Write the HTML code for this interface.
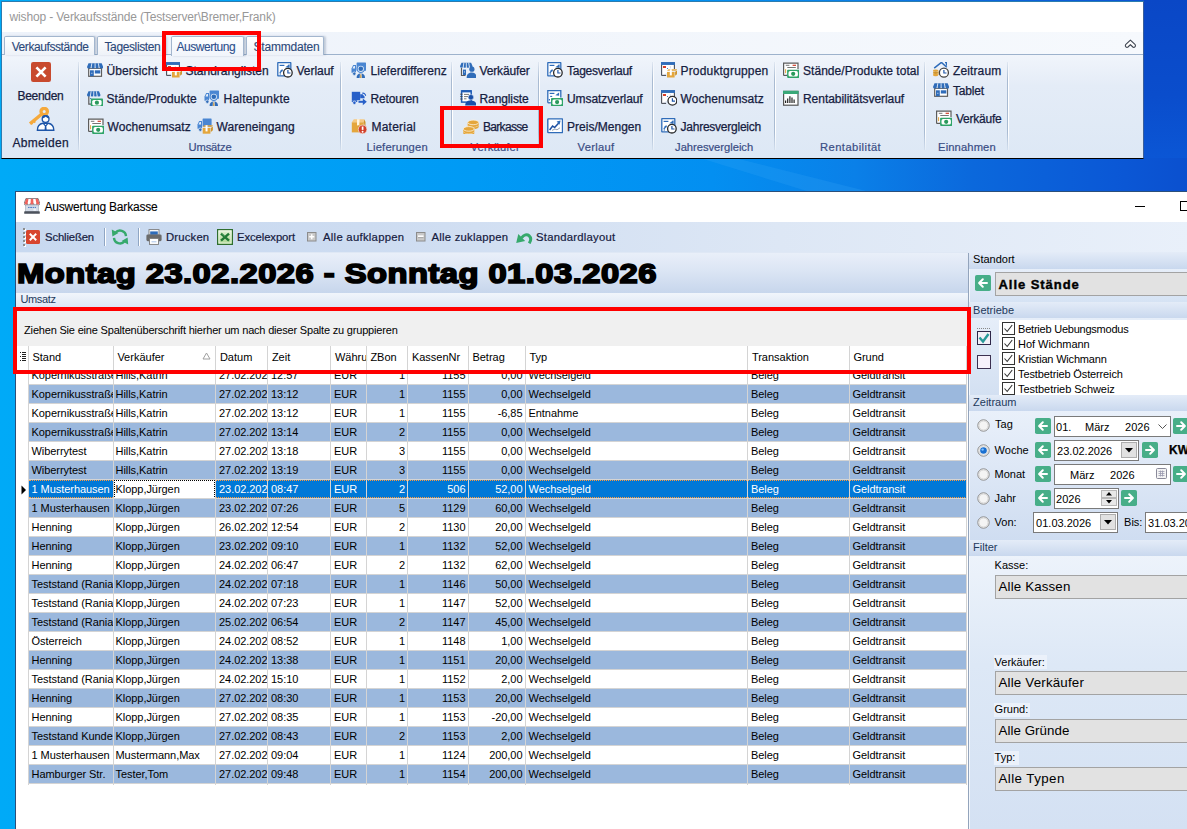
<!DOCTYPE html>
<html><head><meta charset="utf-8"><title>wishop</title>
<style>
html,body{margin:0;padding:0}
body{width:1187px;height:829px;overflow:hidden;position:relative;font-family:"Liberation Sans",sans-serif;background:#0a6fd8}
.b{position:absolute;box-sizing:border-box}
.t{position:absolute;white-space:nowrap;font-family:"Liberation Sans",sans-serif}
.c{position:absolute;white-space:nowrap;overflow:hidden;font-size:11px;line-height:19px;height:19px;color:#000;box-sizing:border-box;letter-spacing:-0.05px}
</style></head><body>
<div class="b" style="left:0px;top:0px;width:1187px;height:829px;background:linear-gradient(90deg,#00aaf7 0%,#00a3f6 17%,#009af5 40%,#038ff1 60%,#0a80e8 72%,#0b68dc 82%,#0b58d6 94%,#0b50cf 100%)"></div>
<div class="b" style="left:1144px;top:0px;width:43px;height:158px;background:linear-gradient(#0a47c6,#0a4dcc 60%,#0b56d5)"></div>
<svg class="b" style="left:700px;top:158px" width="487" height="34" viewBox="0 0 487 34"><path d="M35 0L170 34H110L0 0z" fill="#3aaaf6" opacity="0.22"/></svg>
<div class="b" style="left:1px;top:1px;width:1143px;height:158px;background:#fff;border-left:1px solid #2b7cb0;border-top:1px solid #2b7cb0;border-right:1px solid #3a5f9a;border-bottom:1px solid #000"></div>
<span class="t" style="left:9.5px;top:9.0px;font-size:12px;line-height:16px;color:#989898;letter-spacing:-0.150px;">wishop - Verkaufsstände (Testserver\Bremer,Frank)</span>
<div class="b" style="left:2px;top:32px;width:1141px;height:23px;background:linear-gradient(90deg,#edf2fa,#f6f9fd)"></div>
<div class="b" style="left:2px;top:54px;width:1141px;height:1px;background:#9db2cc"></div>
<div class="b" style="left:2px;top:55px;width:1141px;height:103px;background:linear-gradient(#f1f5fb 0%,#e4ecf7 30%,#dde8f5 100%)"></div>
<div class="b" style="left:4px;top:36px;width:91px;height:19px;background:linear-gradient(#ffffff,#eef2f8);border:1px solid #a3b6ce;border-bottom:none;border-radius:2px 2px 0 0;box-shadow:2px 0 2px rgba(90,110,140,.3)"></div>
<span class="t" style="left:11.7px;top:39.0px;font-size:12px;line-height:16px;color:#2b4878;letter-spacing:-0.424px;-webkit-text-stroke:0.1px currentColor;">Verkaufsstände</span>
<div class="b" style="left:97px;top:36px;width:68px;height:19px;background:linear-gradient(#ffffff,#eef2f8);border:1px solid #a3b6ce;border-bottom:none;border-radius:2px 2px 0 0;box-shadow:2px 0 2px rgba(90,110,140,.3)"></div>
<span class="t" style="left:104.5px;top:39.0px;font-size:12px;line-height:16px;color:#2b4878;letter-spacing:-0.383px;-webkit-text-stroke:0.1px currentColor;">Tageslisten</span>
<div class="b" style="left:171px;top:36px;width:73px;height:20px;background:linear-gradient(#fdfeff,#f1f5fb);border:1px solid #a3b6ce;border-bottom:none;border-radius:2px 2px 0 0;box-shadow:2px 0 2px rgba(90,110,140,.35)"></div>
<span class="t" style="left:176.5px;top:39.0px;font-size:12px;line-height:16px;color:#2b4f8c;letter-spacing:-0.463px;-webkit-text-stroke:0.1px currentColor;">Auswertung</span>
<div class="b" style="left:246px;top:36px;width:78px;height:19px;background:linear-gradient(#ffffff,#eef2f8);border:1px solid #a3b6ce;border-bottom:none;border-radius:2px 2px 0 0;box-shadow:2px 0 2px rgba(90,110,140,.3)"></div>
<span class="t" style="left:253.5px;top:39.0px;font-size:12px;line-height:16px;color:#2b4878;letter-spacing:-0.203px;-webkit-text-stroke:0.1px currentColor;">Stammdaten</span>
<svg class="b" style="left:1124px;top:38px" width="14" height="11" viewBox="0 0 14 11"><path d="M6.400 2.200L11.200 6.700a1.700 1.700 0 0 1-2.400 2.300L6.400 6.600 4 9a1.700 1.700 0 0 1-2.400-2.300Z" fill="#fff" stroke="#3d4450" stroke-width="1.100" stroke-linejoin="round"/></svg>
<div class="b" style="left:78px;top:62px;width:1px;height:88px;background:linear-gradient(rgba(170,188,210,.2),#a9bbd2 20%,#a9bbd2 80%,rgba(170,188,210,.2))"></div>
<div class="b" style="left:79px;top:62px;width:1px;height:88px;background:linear-gradient(rgba(255,255,255,.2),#fff 20%,#fff 80%,rgba(255,255,255,.2))"></div>
<div class="b" style="left:340px;top:62px;width:1px;height:88px;background:linear-gradient(rgba(170,188,210,.2),#a9bbd2 20%,#a9bbd2 80%,rgba(170,188,210,.2))"></div>
<div class="b" style="left:341px;top:62px;width:1px;height:88px;background:linear-gradient(rgba(255,255,255,.2),#fff 20%,#fff 80%,rgba(255,255,255,.2))"></div>
<div class="b" style="left:451px;top:62px;width:1px;height:88px;background:linear-gradient(rgba(170,188,210,.2),#a9bbd2 20%,#a9bbd2 80%,rgba(170,188,210,.2))"></div>
<div class="b" style="left:452px;top:62px;width:1px;height:88px;background:linear-gradient(rgba(255,255,255,.2),#fff 20%,#fff 80%,rgba(255,255,255,.2))"></div>
<div class="b" style="left:538px;top:62px;width:1px;height:88px;background:linear-gradient(rgba(170,188,210,.2),#a9bbd2 20%,#a9bbd2 80%,rgba(170,188,210,.2))"></div>
<div class="b" style="left:539px;top:62px;width:1px;height:88px;background:linear-gradient(rgba(255,255,255,.2),#fff 20%,#fff 80%,rgba(255,255,255,.2))"></div>
<div class="b" style="left:652px;top:62px;width:1px;height:88px;background:linear-gradient(rgba(170,188,210,.2),#a9bbd2 20%,#a9bbd2 80%,rgba(170,188,210,.2))"></div>
<div class="b" style="left:653px;top:62px;width:1px;height:88px;background:linear-gradient(rgba(255,255,255,.2),#fff 20%,#fff 80%,rgba(255,255,255,.2))"></div>
<div class="b" style="left:774px;top:62px;width:1px;height:88px;background:linear-gradient(rgba(170,188,210,.2),#a9bbd2 20%,#a9bbd2 80%,rgba(170,188,210,.2))"></div>
<div class="b" style="left:775px;top:62px;width:1px;height:88px;background:linear-gradient(rgba(255,255,255,.2),#fff 20%,#fff 80%,rgba(255,255,255,.2))"></div>
<div class="b" style="left:924px;top:62px;width:1px;height:88px;background:linear-gradient(rgba(170,188,210,.2),#a9bbd2 20%,#a9bbd2 80%,rgba(170,188,210,.2))"></div>
<div class="b" style="left:925px;top:62px;width:1px;height:88px;background:linear-gradient(rgba(255,255,255,.2),#fff 20%,#fff 80%,rgba(255,255,255,.2))"></div>
<div class="b" style="left:1007px;top:62px;width:1px;height:88px;background:linear-gradient(rgba(170,188,210,.2),#a9bbd2 20%,#a9bbd2 80%,rgba(170,188,210,.2))"></div>
<div class="b" style="left:1008px;top:62px;width:1px;height:88px;background:linear-gradient(rgba(255,255,255,.2),#fff 20%,#fff 80%,rgba(255,255,255,.2))"></div>
<svg class="b" style="left:31px;top:62px" width="20" height="20" viewBox="0 0 20 20"><rect x="0" y="0" width="20" height="20" rx="2.2" fill="#c84a2e"/><path d="M5.4 5.4L14.6 14.6M14.6 5.4L5.4 14.6" stroke="#fff" stroke-width="2.7" stroke-linecap="butt"/></svg>
<span class="t" style="left:17.5px;top:88.0px;font-size:12px;line-height:16px;color:#16203f;letter-spacing:-0.307px;-webkit-text-stroke:0.25px currentColor;">Beenden</span>
<svg class="b" style="left:27px;top:107px" width="28" height="24" viewBox="0 0 28 24"><circle cx="17.200" cy="4.500" r="3.200" fill="none" stroke="#f5a93c" stroke-width="3.300"/><path d="M14.500 7.200l-11.500 9.500" stroke="#f5a93c" stroke-width="3.400"/><path d="M6 13l2.200 2.600M3.600 15l1.800 2.200" stroke="#f5a93c" stroke-width="1.800"/><circle cx="18.600" cy="12" r="3.400" fill="#fff" stroke="#1d55a8" stroke-width="1.300"/><path d="M15 11.400c0-4.600 7.200-4.600 7.200 0c-1.800-.2-2.600-1-3.400-2c-.8 1-2 1.800-3.800 2z" fill="#1d55a8"/><path d="M10.400 23.200c0-4.400 1.600-6.400 5.600-7h5.200c4 .6 5.600 2.600 5.600 7z" fill="#fff" stroke="#1d55a8" stroke-width="1.400"/><path d="M16 16.200l2.600 3 2.600-3" fill="none" stroke="#1d55a8" stroke-width="1.200"/><path d="M18 18.600h1.200l.5 4.400h-2.200z" fill="#1d55a8"/></svg>
<span class="t" style="left:12.5px;top:135.0px;font-size:12px;line-height:16px;color:#16203f;letter-spacing:0.310px;-webkit-text-stroke:0.25px currentColor;">Abmelden</span>
<svg class="b" style="left:87px;top:62px" width="16" height="16" viewBox="0 0 16 16"><rect x="1.700" y="6.300" width="12.800" height="8" fill="#fff" stroke="#5c5c5c" stroke-width="1.200"/><path d="M1.50 1.30h13.20l1.50 3.80a2.02 1.500 0 0 1 -4.05 0a2.02 1.500 0 0 1 -4.05 0a2.02 1.500 0 0 1 -4.05 0a2.02 1.500 0 0 1 -4.05 0z" fill="#2f6cb9"/><path d="M4.80 1.30L4.05 6.10" stroke="#fff" stroke-width="0.800"/><path d="M8.10 1.30L8.10 6.10" stroke="#fff" stroke-width="0.800"/><path d="M11.40 1.30L12.15 6.10" stroke="#fff" stroke-width="0.800"/><rect x="3" y="8.300" width="3.800" height="5.900" fill="#2f6cb9"/><rect x="4.400" y="10.800" width="0.900" height="0.900" fill="#fff"/><rect x="7.800" y="8.300" width="5.500" height="3.200" fill="#2f6cb9"/></svg>
<span class="t" style="left:106.5px;top:62.5px;font-size:12px;line-height:16px;color:#16203f;letter-spacing:0.065px;-webkit-text-stroke:0.25px currentColor;">Übersicht</span>
<svg class="b" style="left:166px;top:62px" width="16" height="16" viewBox="0 0 16 16"><path d="M0.600 13.400v-12h12.800v5.500" fill="#fff" stroke="#4a4e58" stroke-width="1.100"/><path d="M0.600 13.400h4.500" stroke="#4a4e58" stroke-width="1.100"/><path d="M0 1.500h14" stroke="#2f6cb9" stroke-width="2.900"/><rect x="2" y="4.100" width="3" height="1.800" fill="#d42a10"/><rect x="6" y="6" width="1" height="0.900" fill="#2f6cb9"/><path d="M9.400 4v2.400" stroke="#d0d6e2" stroke-width="0.800"/><path d="M6.00 8.80l1.600-1.600h9.00l-2 1.600z" fill="#e4a63c"/><rect x="6.00" y="9.90" width="7.60" height="5.60" fill="#e4a63c"/><path d="M14.10 9.90l2-1.700v3.90l-2 1.700z" fill="#cf952e"/><rect x="8.80" y="7.20" width="2" height="6.20" fill="#fff"/></svg>
<span class="t" style="left:185.5px;top:62.5px;font-size:12px;line-height:16px;color:#16203f;letter-spacing:-0.013px;-webkit-text-stroke:0.25px currentColor;">Standranglisten</span>
<svg class="b" style="left:277px;top:62px" width="16" height="16" viewBox="0 0 16 16"><rect x="0.800" y="0.600" width="13" height="13.300" rx="0.500" fill="#fff" stroke="#2f6cb9" stroke-width="1.300"/><path d="M2.600 3.400h4.800" stroke="#2f6cb9" stroke-width="1.200"/><path d="M2.800 11l2.500-3.200" stroke="#2f6cb9" stroke-width="1.300"/><path d="M3.200 8.400l2.600-1.200-.6 2.600z" fill="#2f6cb9"/><path d="M8.300 5.300l3.800-2.800v3.300z" fill="#2f6cb9"/><path d="M12.100 2.500v3.300" stroke="#2f6cb9" stroke-width="1"/><path d="M2.600 12h1.400" stroke="#2f6cb9" stroke-width="1"/><circle cx="10.9" cy="10.7" r="4.3" fill="#fff" stroke="#2a2a2a" stroke-width="1.300"/><path d="M10.9 8.1v2.9h2.6" fill="none" stroke="#1d55a8" stroke-width="1.200"/></svg>
<span class="t" style="left:296.5px;top:62.5px;font-size:12px;line-height:16px;color:#16203f;letter-spacing:-0.026px;-webkit-text-stroke:0.25px currentColor;">Verlauf</span>
<svg class="b" style="left:87px;top:90px" width="16" height="16" viewBox="0 0 16 16"><path d="M1.800 6v8.200h3" fill="none" stroke="#5c5c5c" stroke-width="1.200"/><path d="M1.50 1.30h10.50l1.50 3.60a1.69 1.500 0 0 1 -3.38 0a1.69 1.500 0 0 1 -3.38 0a1.69 1.500 0 0 1 -3.38 0a1.69 1.500 0 0 1 -3.38 0z" fill="#2f6cb9"/><path d="M4.12 1.30L3.38 5.90" stroke="#fff" stroke-width="0.800"/><path d="M6.75 1.30L6.75 5.90" stroke="#fff" stroke-width="0.800"/><path d="M9.38 1.30L10.12 5.90" stroke="#fff" stroke-width="0.800"/><rect x="3.200" y="8" width="1" height="1" fill="#2f6cb9"/><rect x="3.80" y="8.60" width="12.20" height="8.20" rx="0.800" fill="#2fa468"/><rect x="5.20" y="10.00" width="9.40" height="5.40" rx="1.600" fill="#fff"/><circle cx="9.90" cy="12.70" r="2.100" fill="#2a9a5c"/></svg>
<span class="t" style="left:106.5px;top:90.5px;font-size:12px;line-height:16px;color:#16203f;letter-spacing:0.058px;-webkit-text-stroke:0.25px currentColor;">Stände/Produkte</span>
<svg class="b" style="left:204px;top:90px" width="16" height="16" viewBox="0 0 16 16"><rect x="5.600" y="0.400" width="9.4" height="8.4" rx="0.600" fill="#4a86d2"/><path d="M0.500 10.800V6.600L2.200 3H5V10.800Z" fill="#4a86d2"/><path d="M1.500 6.400L2.700 4H4V6.400Z" fill="#e3edf9"/><circle cx="3.300" cy="11.700" r="1.700" fill="#2f6cb9" stroke="#e6eef8" stroke-width="0.700"/><circle cx="9.800" cy="6.800" r="3.700" fill="#d6e4f6" stroke="#4a86d2" stroke-width="1.100"/><circle cx="9.800" cy="6.800" r="2.300" fill="#2f6cb9"/><path d="M5.600 16c0-3 1.200-4.600 4.200-4.600s4.200 1.600 4.200 4.600z" fill="#2f6cb9"/><path d="M8.900 11.600h1.800l.3 4.400h-2.400z" fill="#cdd2da"/><path d="M9.400 12.400h.8l.2 3.600h-1.200z" fill="#cf952e"/></svg>
<span class="t" style="left:223.5px;top:90.5px;font-size:12px;line-height:16px;color:#16203f;letter-spacing:0.216px;-webkit-text-stroke:0.25px currentColor;">Haltepunkte</span>
<svg class="b" style="left:88px;top:118px" width="16" height="16" viewBox="0 0 16 16"><path d="M0.600 13.400v-12.300h14.400v6" fill="#fff" stroke="#5c5c5c" stroke-width="1.200"/><path d="M0.600 13.400h4" stroke="#5c5c5c" stroke-width="1.200"/><path d="M2.800 3.300h3.600" stroke="#777" stroke-width="1"/><path d="M9.600 3.300h3.400" stroke="#d13f2a" stroke-width="1.200"/><path d="M4.300 5.500h8.500" stroke="#777" stroke-width="1"/><path d="M2.600 7.200v4" stroke="#e4a63c" stroke-width="1"/><rect x="4.10" y="7.70" width="12.20" height="8.20" rx="0.800" fill="#2fa468"/><rect x="5.50" y="9.10" width="9.40" height="5.40" rx="1.600" fill="#fff"/><circle cx="10.20" cy="11.80" r="2.100" fill="#2a9a5c"/></svg>
<span class="t" style="left:107.5px;top:118.5px;font-size:12px;line-height:16px;color:#16203f;letter-spacing:0.066px;-webkit-text-stroke:0.25px currentColor;">Wochenumsatz</span>
<svg class="b" style="left:197px;top:118px" width="16" height="16" viewBox="0 0 16 16"><rect x="5.600" y="0.400" width="9" height="8.4" rx="0.600" fill="#4a86d2"/><path d="M0.500 10.800V6.600L2.200 3H5V10.800Z" fill="#4a86d2"/><path d="M1.500 6.400L2.700 4H4V6.400Z" fill="#e3edf9"/><circle cx="3.300" cy="11.700" r="1.700" fill="#2f6cb9" stroke="#e6eef8" stroke-width="0.700"/><path d="M5.70 8.80l1.600-1.600h9.10l-2 1.600z" fill="#e4a63c"/><rect x="5.70" y="9.90" width="7.70" height="5.80" fill="#e4a63c"/><path d="M13.90 9.90l2-1.700v4.10l-2 1.700z" fill="#cf952e"/><rect x="8.55" y="7.20" width="2" height="6.20" fill="#fff"/></svg>
<span class="t" style="left:216.5px;top:118.5px;font-size:12px;line-height:16px;color:#16203f;letter-spacing:0.054px;-webkit-text-stroke:0.25px currentColor;">Wareneingang</span>
<span class="t" style="left:188.6px;top:139.0px;font-size:11.2px;line-height:16px;color:#3a4d84;letter-spacing:-0.178px;-webkit-text-stroke:0.2px currentColor;">Umsätze</span>
<svg class="b" style="left:351px;top:62px" width="16" height="16" viewBox="0 0 16 16"><rect x="5.600" y="0.400" width="9.4" height="8.4" rx="0.600" fill="#4a86d2"/><path d="M0.500 10.800V6.600L2.200 3H5V10.800Z" fill="#4a86d2"/><path d="M1.500 6.400L2.700 4H4V6.400Z" fill="#e3edf9"/><circle cx="3.300" cy="11.700" r="1.700" fill="#2f6cb9" stroke="#e6eef8" stroke-width="0.700"/><circle cx="9.800" cy="6.800" r="3.700" fill="#d6e4f6" stroke="#4a86d2" stroke-width="1.100"/><circle cx="9.800" cy="6.800" r="2.300" fill="#2f6cb9"/><path d="M5.600 16c0-3 1.200-4.600 4.200-4.600s4.200 1.600 4.200 4.600z" fill="#2f6cb9"/><path d="M8.900 11.600h1.800l.3 4.400h-2.400z" fill="#cdd2da"/><path d="M9.400 12.400h.8l.2 3.600h-1.200z" fill="#cf952e"/></svg>
<span class="t" style="left:370.5px;top:62.5px;font-size:12px;line-height:16px;color:#16203f;letter-spacing:0.027px;-webkit-text-stroke:0.25px currentColor;">Lieferdifferenz</span>
<svg class="b" style="left:351px;top:90px" width="16" height="16" viewBox="0 0 16 16"><path d="M0.800 1.800h8.400v8.400h-8.400z" fill="#2860c8"/><path d="M9.200 4.200h2.400l2 2.600v1.400h-4.400z" fill="#2860c8"/><path d="M11.200 3.300a2.600 2.600 0 0 1 3.400 2.600" fill="none" stroke="#2860c8" stroke-width="1.100"/><path d="M0.800 10.200h5.400v1.800h-5.400z" fill="#2860c8"/><circle cx="3.400" cy="12.800" r="1.700" fill="#2860c8" stroke="#e6eef8" stroke-width="0.700"/><path d="M7.500 11.800h6.200" stroke="#2860c8" stroke-width="2"/><path d="M11.800 8.400l4 3.400-4 3.400z" fill="#2860c8"/></svg>
<span class="t" style="left:370.5px;top:90.5px;font-size:12px;line-height:16px;color:#16203f;letter-spacing:-0.166px;-webkit-text-stroke:0.25px currentColor;">Retouren</span>
<svg class="b" style="left:351px;top:118px" width="16" height="16" viewBox="0 0 16 16"><path d="M0.800 4.200h12v10.200h-12z" fill="#e4a63c"/><path d="M0.800 4.200l2-3h10.500l-0.500 3z" fill="#f6c982"/><path d="M12.800 4.200l.5-3 1.200 2.800v8z" fill="#cf952e"/><path d="M6 1.200h2.600l-.2 3v3.600l-1.200-.9-1.200.9v-3.600z" fill="#fff6e2"/><circle cx="11.600" cy="11.400" r="4.300" fill="#d13f2a" stroke="#f3e4dc" stroke-width="0.700"/><path d="M11.600 8.500v3.400" stroke="#fff" stroke-width="1.700"/><circle cx="11.600" cy="13.700" r="0.950" fill="#fff"/></svg>
<span class="t" style="left:371.5px;top:118.5px;font-size:12px;line-height:16px;color:#16203f;letter-spacing:0.218px;-webkit-text-stroke:0.25px currentColor;">Material</span>
<span class="t" style="left:366.6px;top:139.0px;font-size:11.2px;line-height:16px;color:#3a4d84;letter-spacing:0.196px;-webkit-text-stroke:0.2px currentColor;">Lieferungen</span>
<svg class="b" style="left:460px;top:62px" width="16" height="16" viewBox="0 0 16 16"><path d="M1.500 6v7.500h4" fill="none" stroke="#5c5c5c" stroke-width="1.200"/><path d="M1.50 0.80h9.60l1.50 3.50a1.57 1.500 0 0 1 -3.15 0a1.57 1.500 0 0 1 -3.15 0a1.57 1.500 0 0 1 -3.15 0a1.57 1.500 0 0 1 -3.15 0z" fill="#2f6cb9"/><path d="M3.90 0.80L3.15 5.30" stroke="#fff" stroke-width="0.800"/><path d="M6.30 0.80L6.30 5.30" stroke="#fff" stroke-width="0.800"/><path d="M8.70 0.80L9.45 5.30" stroke="#fff" stroke-width="0.800"/><rect x="3" y="7.600" width="3" height="5.400" fill="#2f6cb9"/><rect x="4" y="9.500" width="0.900" height="0.900" fill="#fff"/><circle cx="11.900" cy="7.200" r="2.600" fill="#2f6cb9"/><path d="M6.600 16c0-3.400 1.600-5.600 5.200-5.600s4.600 2.200 4.600 5.600z" fill="#2f6cb9"/></svg>
<span class="t" style="left:479.5px;top:62.5px;font-size:12px;line-height:16px;color:#16203f;letter-spacing:-0.145px;-webkit-text-stroke:0.25px currentColor;">Verkäufer</span>
<svg class="b" style="left:460px;top:90px" width="16" height="16" viewBox="0 0 16 16"><rect x="1.600" y="0.900" width="9.600" height="11.200" fill="#fff" stroke="#1f5cb6" stroke-width="1.500"/><path d="M1.600 1.300h9.600" stroke="#1f5cb6" stroke-width="2.200"/><path d="M0.300 4.200h2.200M0.300 6.600h2.200M0.300 9h2.200" stroke="#444" stroke-width="1"/><path d="M4 4.400h5M4 6.600h4M4 8.800h2.500" stroke="#777" stroke-width="1"/><circle cx="10.900" cy="7.200" r="2.700" fill="#174fa8" stroke="#e6eef8" stroke-width="0.500"/><path d="M5.200 15.600c0-3 1.600-5 5.600-5s5.600 2 5.600 5z" fill="#174fa8"/></svg>
<span class="t" style="left:479.5px;top:90.5px;font-size:12px;line-height:16px;color:#16203f;letter-spacing:-0.103px;-webkit-text-stroke:0.25px currentColor;">Rangliste</span>
<svg class="b" style="left:463px;top:118px" width="16" height="16" viewBox="0 0 16 16"><path d="M4.70 6.60v2.20a5.50 2.30 0 0 0 11.00 0v-2.20z" fill="#e4a63c"/><ellipse cx="10.20" cy="6.60" rx="5.50" ry="2.30" fill="#e4a63c" stroke="#fdf3e0" stroke-width="0.800"/><path d="M4.70 4.40v2.20a5.50 2.30 0 0 0 11.00 0v-2.20z" fill="#e4a63c"/><ellipse cx="10.20" cy="4.40" rx="5.50" ry="2.30" fill="#e4a63c" stroke="#fdf3e0" stroke-width="0.800"/><path d="M0.30 13.10v2.20a5.50 2.30 0 0 0 11.00 0v-2.20z" fill="#e4a63c"/><ellipse cx="5.80" cy="13.10" rx="5.50" ry="2.30" fill="#e4a63c" stroke="#fdf3e0" stroke-width="0.800"/><path d="M0.30 10.90v2.20a5.50 2.30 0 0 0 11.00 0v-2.20z" fill="#e4a63c"/><ellipse cx="5.80" cy="10.90" rx="5.50" ry="2.30" fill="#e4a63c" stroke="#fdf3e0" stroke-width="0.800"/></svg>
<span class="t" style="left:483.0px;top:118.5px;font-size:12px;line-height:16px;color:#16203f;letter-spacing:-0.688px;-webkit-text-stroke:0.25px currentColor;">Barkasse</span>
<span class="t" style="left:470.6px;top:139.0px;font-size:11.2px;line-height:16px;color:#3a4d84;letter-spacing:0.148px;-webkit-text-stroke:0.2px currentColor;">Verkäufer</span>
<svg class="b" style="left:547px;top:62px" width="16" height="16" viewBox="0 0 16 16"><rect x="0.800" y="0.600" width="13" height="13.300" rx="0.500" fill="#fff" stroke="#2f6cb9" stroke-width="1.300"/><path d="M2.600 3.400h4.800" stroke="#2f6cb9" stroke-width="1.200"/><path d="M2.800 11l2.500-3.200" stroke="#2f6cb9" stroke-width="1.300"/><path d="M3.200 8.400l2.600-1.200-.6 2.600z" fill="#2f6cb9"/><path d="M8.300 5.300l3.800-2.800v3.300z" fill="#2f6cb9"/><path d="M12.100 2.500v3.300" stroke="#2f6cb9" stroke-width="1"/><path d="M2.600 12h1.400" stroke="#2f6cb9" stroke-width="1"/><circle cx="10.9" cy="10.7" r="4.3" fill="#fff" stroke="#2a2a2a" stroke-width="1.300"/><path d="M10.9 8.1v2.9h2.6" fill="none" stroke="#1d55a8" stroke-width="1.200"/></svg>
<span class="t" style="left:567.0px;top:62.5px;font-size:12px;line-height:16px;color:#16203f;letter-spacing:-0.258px;-webkit-text-stroke:0.25px currentColor;">Tagesverlauf</span>
<svg class="b" style="left:547px;top:90px" width="16" height="16" viewBox="0 0 16 16"><path d="M0.800 12.800v-12.200h13v7" fill="#fff" stroke="#2f6cb9" stroke-width="1.300"/><path d="M0.800 12.800h3" stroke="#2f6cb9" stroke-width="1.300"/><path d="M2.600 3.400h4.800" stroke="#2f6cb9" stroke-width="1.200"/><path d="M3.200 6.400h2" stroke="#2f6cb9" stroke-width="1.100"/><path d="M8.300 5.300l3.800-2.800v3.300z" fill="#2f6cb9"/><path d="M2.400 9v1.600" stroke="#2f6cb9" stroke-width="1.200"/><rect x="4.00" y="8.00" width="12.20" height="8.20" rx="0.800" fill="#2fa468"/><rect x="5.40" y="9.40" width="9.40" height="5.40" rx="1.600" fill="#fff"/><circle cx="10.10" cy="12.10" r="2.100" fill="#2a9a5c"/></svg>
<span class="t" style="left:567.0px;top:90.5px;font-size:12px;line-height:16px;color:#16203f;letter-spacing:-0.082px;-webkit-text-stroke:0.25px currentColor;">Umsatzverlauf</span>
<svg class="b" style="left:547px;top:118px" width="16" height="16" viewBox="0 0 16 16"><rect x="0.800" y="0.900" width="14.700" height="13.700" rx="0.500" fill="#fff" stroke="#2f6cb9" stroke-width="1.400"/><path d="M2.600 12l3-4 2 1.600 4.200-4.600" fill="none" stroke="#1d4fa0" stroke-width="1.500"/><path d="M9.600 3.600l4-1-1 4.200z" fill="#2f6cb9"/><path d="M5 12.400l3-1.400 2 .8 3-2" fill="none" stroke="#8a96a8" stroke-width="0.900"/></svg>
<span class="t" style="left:567.0px;top:118.5px;font-size:12px;line-height:16px;color:#16203f;letter-spacing:0.015px;-webkit-text-stroke:0.25px currentColor;">Preis/Mengen</span>
<span class="t" style="left:577.6px;top:139.0px;font-size:11.2px;line-height:16px;color:#3a4d84;letter-spacing:0.292px;-webkit-text-stroke:0.2px currentColor;">Verlauf</span>
<svg class="b" style="left:661px;top:62px" width="16" height="16" viewBox="0 0 16 16"><path d="M0.600 13.400v-12h12.800v5.500" fill="#fff" stroke="#4a4e58" stroke-width="1.100"/><path d="M0.600 13.400h4.500" stroke="#4a4e58" stroke-width="1.100"/><path d="M0 1.500h14" stroke="#2f6cb9" stroke-width="2.900"/><rect x="2" y="4.100" width="3" height="1.800" fill="#d42a10"/><rect x="6" y="6" width="1" height="0.900" fill="#2f6cb9"/><path d="M9.400 4v2.400" stroke="#d0d6e2" stroke-width="0.800"/><path d="M6.00 8.80l1.600-1.600h9.00l-2 1.600z" fill="#e4a63c"/><rect x="6.00" y="9.90" width="7.60" height="5.60" fill="#e4a63c"/><path d="M14.10 9.90l2-1.700v3.90l-2 1.700z" fill="#cf952e"/><rect x="8.80" y="7.20" width="2" height="6.20" fill="#fff"/></svg>
<span class="t" style="left:680.5px;top:62.5px;font-size:12px;line-height:16px;color:#16203f;letter-spacing:0.178px;-webkit-text-stroke:0.25px currentColor;">Produktgruppen</span>
<svg class="b" style="left:661px;top:90px" width="16" height="16" viewBox="0 0 16 16"><path d="M0.600 13.400v-12h12.800v5.500" fill="#fff" stroke="#4a4e58" stroke-width="1.100"/><path d="M0.600 13.400h4.500" stroke="#4a4e58" stroke-width="1.100"/><path d="M0 1.500h14" stroke="#2f6cb9" stroke-width="2.900"/><rect x="2" y="4.100" width="3" height="1.800" fill="#d42a10"/><rect x="6" y="6" width="1" height="0.900" fill="#2f6cb9"/><path d="M9.400 4v2.400" stroke="#d0d6e2" stroke-width="0.800"/><circle cx="11.4" cy="10.8" r="4.4" fill="#fff" stroke="#2a2a2a" stroke-width="1.300"/><path d="M11.4 8.200000000000001v2.9h2.6" fill="none" stroke="#1d55a8" stroke-width="1.200"/></svg>
<span class="t" style="left:680.5px;top:90.5px;font-size:12px;line-height:16px;color:#16203f;letter-spacing:0.066px;-webkit-text-stroke:0.25px currentColor;">Wochenumsatz</span>
<svg class="b" style="left:661px;top:118px" width="16" height="16" viewBox="0 0 16 16"><rect x="0.800" y="0.600" width="13" height="13.300" rx="0.500" fill="#fff" stroke="#2f6cb9" stroke-width="1.300"/><path d="M2.600 3.400h4.800" stroke="#2f6cb9" stroke-width="1.200"/><path d="M2.800 11l2.500-3.200" stroke="#2f6cb9" stroke-width="1.300"/><path d="M3.200 8.400l2.600-1.200-.6 2.600z" fill="#2f6cb9"/><path d="M8.300 5.300l3.800-2.800v3.300z" fill="#2f6cb9"/><path d="M12.100 2.500v3.300" stroke="#2f6cb9" stroke-width="1"/><path d="M2.600 12h1.400" stroke="#2f6cb9" stroke-width="1"/><circle cx="10.9" cy="10.7" r="4.3" fill="#fff" stroke="#2a2a2a" stroke-width="1.300"/><path d="M10.9 8.1v2.9h2.6" fill="none" stroke="#1d55a8" stroke-width="1.200"/></svg>
<span class="t" style="left:680.5px;top:118.5px;font-size:12px;line-height:16px;color:#16203f;letter-spacing:-0.238px;-webkit-text-stroke:0.25px currentColor;">Jahresvergleich</span>
<span class="t" style="left:675.1px;top:139.0px;font-size:11.2px;line-height:16px;color:#3a4d84;letter-spacing:-0.022px;-webkit-text-stroke:0.2px currentColor;">Jahresvergleich</span>
<svg class="b" style="left:783px;top:62px" width="16" height="16" viewBox="0 0 16 16"><path d="M0.600 13.400v-12.300h14.400v6" fill="#fff" stroke="#5c5c5c" stroke-width="1.200"/><path d="M0.600 13.400h4" stroke="#5c5c5c" stroke-width="1.200"/><path d="M2.800 3.300h3.600" stroke="#777" stroke-width="1"/><path d="M9.600 3.300h3.400" stroke="#d13f2a" stroke-width="1.200"/><path d="M4.300 5.500h8.500" stroke="#777" stroke-width="1"/><path d="M2.600 7.200v4" stroke="#e4a63c" stroke-width="1"/><rect x="4.10" y="7.70" width="12.20" height="8.20" rx="0.800" fill="#2fa468"/><rect x="5.50" y="9.10" width="9.40" height="5.40" rx="1.600" fill="#fff"/><circle cx="10.20" cy="11.80" r="2.100" fill="#2a9a5c"/></svg>
<span class="t" style="left:803.0px;top:62.5px;font-size:12px;line-height:16px;color:#16203f;letter-spacing:0.040px;-webkit-text-stroke:0.25px currentColor;">Stände/Produkte total</span>
<svg class="b" style="left:783px;top:90px" width="16" height="16" viewBox="0 0 16 16"><rect x="0.600" y="1.400" width="14.400" height="13.800" fill="#fff" stroke="#555" stroke-width="1.200"/><path d="M0 2.400h15.600" stroke="#3aa878" stroke-width="3.200"/><path d="M2.600 13v-2.400M4.700 13v-4.600M6.900 13v-6.800M9 13v-5.600M11.100 13v-3.600" stroke="#222" stroke-width="1.200"/></svg>
<span class="t" style="left:803.0px;top:90.5px;font-size:12px;line-height:16px;color:#16203f;letter-spacing:-0.045px;-webkit-text-stroke:0.25px currentColor;">Rentabilitätsverlauf</span>
<span class="t" style="left:820.1px;top:139.0px;font-size:11.2px;line-height:16px;color:#3a4d84;letter-spacing:0.417px;-webkit-text-stroke:0.2px currentColor;">Rentabilität</span>
<svg class="b" style="left:933px;top:62px" width="16" height="16" viewBox="0 0 16 16"><path d="M1.200 6.200l7.200-5.800 5.400 4.800" fill="none" stroke="#2f6cb9" stroke-width="1.500"/><path d="M12 0.600h1.400v3.200" fill="none" stroke="#2f6cb9" stroke-width="1.200"/><ellipse cx="2.600" cy="8.600" rx="2.600" ry="1.200" fill="#e4a63c"/><ellipse cx="2.600" cy="10.800" rx="2.600" ry="1.200" fill="#cf952e"/><ellipse cx="2.600" cy="13" rx="2.600" ry="1.200" fill="#e4a63c"/><path d="M0 8.600v4.400M5.200 8.600v4.400" stroke="#e4a63c" stroke-width="0.800"/><circle cx="10.9" cy="10.7" r="4.5" fill="#fff" stroke="#444" stroke-width="1.300"/><path d="M10.9 8.1v2.9h2.6" fill="none" stroke="#1d55a8" stroke-width="1.200"/></svg>
<span class="t" style="left:953.0px;top:62.5px;font-size:12px;line-height:16px;color:#16203f;letter-spacing:0.123px;-webkit-text-stroke:0.25px currentColor;">Zeitraum</span>
<svg class="b" style="left:933px;top:82px" width="16" height="16" viewBox="0 0 16 16"><rect x="1.700" y="6.300" width="12.800" height="8" fill="#fff" stroke="#5c5c5c" stroke-width="1.200"/><path d="M1.50 1.30h13.20l1.50 3.80a2.02 1.500 0 0 1 -4.05 0a2.02 1.500 0 0 1 -4.05 0a2.02 1.500 0 0 1 -4.05 0a2.02 1.500 0 0 1 -4.05 0z" fill="#2f6cb9"/><path d="M4.80 1.30L4.05 6.10" stroke="#fff" stroke-width="0.800"/><path d="M8.10 1.30L8.10 6.10" stroke="#fff" stroke-width="0.800"/><path d="M11.40 1.30L12.15 6.10" stroke="#fff" stroke-width="0.800"/><rect x="3" y="8.300" width="3.800" height="5.900" fill="#2f6cb9"/><rect x="4.400" y="10.800" width="0.900" height="0.900" fill="#fff"/><rect x="7.800" y="8.300" width="5.500" height="3.200" fill="#2f6cb9"/></svg>
<span class="t" style="left:953.0px;top:82.5px;font-size:12px;line-height:16px;color:#16203f;letter-spacing:-0.164px;-webkit-text-stroke:0.25px currentColor;">Tablet</span>
<svg class="b" style="left:936px;top:110px" width="16" height="16" viewBox="0 0 16 16"><path d="M0.600 13.400v-12.300h14.400v6" fill="#fff" stroke="#5c5c5c" stroke-width="1.200"/><path d="M0.600 13.400h4" stroke="#5c5c5c" stroke-width="1.200"/><path d="M2.800 3.300h3.600" stroke="#777" stroke-width="1"/><path d="M9.600 3.300h3.400" stroke="#d13f2a" stroke-width="1.200"/><path d="M4.300 5.500h8.500" stroke="#777" stroke-width="1"/><path d="M2.600 7.200v4" stroke="#e4a63c" stroke-width="1"/><rect x="4.10" y="7.70" width="12.20" height="8.20" rx="0.800" fill="#2fa468"/><rect x="5.50" y="9.10" width="9.40" height="5.40" rx="1.600" fill="#fff"/><circle cx="10.20" cy="11.80" r="2.100" fill="#2a9a5c"/></svg>
<span class="t" style="left:956.0px;top:110.5px;font-size:12px;line-height:16px;color:#16203f;letter-spacing:-0.238px;-webkit-text-stroke:0.25px currentColor;">Verkäufe</span>
<span class="t" style="left:938.1px;top:139.0px;font-size:11.2px;line-height:16px;color:#3a4d84;letter-spacing:0.120px;-webkit-text-stroke:0.2px currentColor;">Einnahmen</span>
<div class="b" style="left:15px;top:191px;width:1180px;height:640px;background:#fff;border-left:1px solid #2b4f7a;border-top:1px solid #2b4f7a"></div>
<svg class="b" style="left:24px;top:198px" width="16" height="16" viewBox="0 0 16 16"><path d="M2 0.400h12l1.800 5.200c0 2-3.100 2-3.100 0c0 2-3.100 2-3.100 0c0 2-3.200 2-3.200 0c0 2-3.100 2-3.100 0c0 2-3.100 2-3.100 0z" fill="#fff" stroke="#5a5a62" stroke-width="0.800"/><path d="M2.200 0.800h2.300l-.9 4.800c0 1.600-3 1.600-3 0z" fill="#f0625c"/><path d="M6.800 0.800h2.400l.3 4.800c0 1.600-3 1.600-3 0z" fill="#f0625c"/><path d="M11.500 0.800h2.300l1.600 4.800c0 1.600-3 1.600-3 0z" fill="#f0625c"/><rect x="1.600" y="7" width="12.800" height="6.400" fill="#d4dce8" stroke="#9aa4b2" stroke-width="0.600"/><path d="M4 9.400h1.600M6.200 9.400h2M8.800 9.400h1.400M10.800 9.400h1.200" stroke="#4a78c0" stroke-width="1"/><rect x="9.500" y="10.800" width="2.400" height="2" fill="#eef2f8"/><rect x="0.200" y="13.300" width="15.600" height="2.500" rx="0.600" fill="#4c525c"/></svg>
<span class="t" style="left:44.5px;top:199.0px;font-size:12px;line-height:16px;color:#000;letter-spacing:-0.195px;-webkit-text-stroke:0.1px currentColor;">Auswertung Barkasse</span>
<div class="b" style="left:1135px;top:206px;width:10px;height:1px;background:#000"></div>
<div class="b" style="left:1180px;top:201px;width:10px;height:10px;border:1px solid #000"></div>
<div class="b" style="left:16px;top:222px;width:1175px;height:30px;background:linear-gradient(90deg,#c8d9f0 0%,#cddcf1 30%,#dde7f5 65%,#e9f0fa 100%)"></div>
<div class="b" style="left:16px;top:252px;width:1175px;height:1px;background:#dfe8f5"></div>
<div class="b" style="left:24px;top:229px;width:2px;height:2px;background:#fff"></div>
<div class="b" style="left:23px;top:228px;width:2px;height:2px;background:#8c8c8c"></div>
<div class="b" style="left:24px;top:233px;width:2px;height:2px;background:#fff"></div>
<div class="b" style="left:23px;top:232px;width:2px;height:2px;background:#8c8c8c"></div>
<div class="b" style="left:24px;top:237px;width:2px;height:2px;background:#fff"></div>
<div class="b" style="left:23px;top:236px;width:2px;height:2px;background:#8c8c8c"></div>
<div class="b" style="left:24px;top:241px;width:2px;height:2px;background:#fff"></div>
<div class="b" style="left:23px;top:240px;width:2px;height:2px;background:#8c8c8c"></div>
<div class="b" style="left:24px;top:245px;width:2px;height:2px;background:#fff"></div>
<div class="b" style="left:23px;top:244px;width:2px;height:2px;background:#8c8c8c"></div>
<svg class="b" style="left:26px;top:230px" width="14" height="14" viewBox="0 0 14 14"><rect x="0" y="0" width="14" height="14" rx="1.54" fill="#d8452e"/><path d="M3.7800000000000002 3.7800000000000002L10.219999999999999 10.219999999999999M10.219999999999999 3.7800000000000002L3.7800000000000002 10.219999999999999" stroke="#fff" stroke-width="1.8900000000000001" stroke-linecap="butt"/></svg>
<span class="t" style="left:45.0px;top:229.0px;font-size:11.3px;line-height:16px;color:#16203f;letter-spacing:-0.140px;-webkit-text-stroke:0.2px currentColor;">Schließen</span>
<div class="b" style="left:104px;top:228px;width:1px;height:18px;background:#8fa6c4"></div>
<div class="b" style="left:105px;top:228px;width:1px;height:18px;background:#fff"></div>
<svg class="b" style="left:111px;top:228px" width="18" height="18" viewBox="0 0 18 18"><path d="M15 8.200a6 6 0 0 0-10.600-3.400" fill="none" stroke="#36a96c" stroke-width="2.400"/><path d="M0.800 1.600l0.600 6.800 6-3.400z" fill="#36a96c"/><path d="M3 9.800a6 6 0 0 0 10.600 3.400" fill="none" stroke="#36a96c" stroke-width="2.400"/><path d="M17.200 16.400l-0.600-6.800-6 3.400z" fill="#36a96c"/></svg>
<div class="b" style="left:138px;top:228px;width:1px;height:18px;background:#8fa6c4"></div>
<div class="b" style="left:139px;top:228px;width:1px;height:18px;background:#fff"></div>
<svg class="b" style="left:146px;top:229px" width="16" height="16" viewBox="0 0 16 16"><rect x="3" y="0.600" width="10" height="5.500" fill="#fff" stroke="#7a7a7a" stroke-width="0.900"/><rect x="4.200" y="2.400" width="7.600" height="3.400" fill="#2f6cb9"/><rect x="0.400" y="5.400" width="15.200" height="6.800" rx="1.400" fill="#6b6b6b"/><rect x="3.500" y="9.400" width="9" height="6" fill="#fff" stroke="#7a7a7a" stroke-width="0.900"/><path d="M5.500 12.800h5" stroke="#a8c4e8" stroke-width="1"/></svg>
<span class="t" style="left:166.0px;top:229.0px;font-size:11.3px;line-height:16px;color:#16203f;letter-spacing:0.176px;-webkit-text-stroke:0.2px currentColor;">Drucken</span>
<svg class="b" style="left:217px;top:229px" width="16" height="16" viewBox="0 0 16 16"><defs><linearGradient id="xg" x1="0" y1="0" x2="0" y2="1"><stop offset="0" stop-color="#e4f3d8"/><stop offset="1" stop-color="#a9d58e"/></linearGradient></defs><rect x="0.600" y="0.600" width="14.800" height="14.800" fill="url(#xg)" stroke="#2f6e2f" stroke-width="1.200"/><rect x="2" y="2" width="12" height="12" fill="none" stroke="#f3faee" stroke-width="0.800"/><path d="M4 4.600l8 7M12 4.600l-8 7" stroke="#1f7a34" stroke-width="2.400"/><path d="M4.600 4.200l3.400 3" stroke="#7fc08a" stroke-width="0.700"/></svg>
<span class="t" style="left:237.0px;top:229.0px;font-size:11.3px;line-height:16px;color:#16203f;letter-spacing:-0.091px;-webkit-text-stroke:0.2px currentColor;">Excelexport</span>
<svg class="b" style="left:307px;top:232px" width="10" height="10" viewBox="0 0 10 10"><rect x="0.500" y="0.500" width="8.500" height="8.500" fill="#c9c9c9" stroke="#8c8c8c"/><path d="M2.200 4.750h5.100M4.750 2.200v5.100" stroke="#fff" stroke-width="1.400"/></svg>
<span class="t" style="left:323.0px;top:229.0px;font-size:11.3px;line-height:16px;color:#16203f;letter-spacing:0.276px;-webkit-text-stroke:0.2px currentColor;">Alle aufklappen</span>
<svg class="b" style="left:416px;top:232px" width="10" height="10" viewBox="0 0 10 10"><rect x="0.500" y="0.500" width="8.500" height="8.500" fill="#c9c9c9" stroke="#8c8c8c"/><path d="M2 4.200h5.500" stroke="#fff" stroke-width="1.600"/><path d="M2 5.600h5.500" stroke="#a8a8a8" stroke-width="1"/></svg>
<span class="t" style="left:431.5px;top:229.0px;font-size:11.3px;line-height:16px;color:#16203f;letter-spacing:0.241px;-webkit-text-stroke:0.2px currentColor;">Alle zuklappen</span>
<svg class="b" style="left:516px;top:232px" width="17" height="12" viewBox="0 0 17 12"><path d="M5.500 5.800C8 2.600 11 1.800 13 3.600S15.300 8.200 13.200 11.300" fill="none" stroke="#36a96c" stroke-width="3"/><path d="M0.200 11.100L2.300 2 9.200 8.900z" fill="#36a96c"/></svg>
<span class="t" style="left:536.0px;top:229.0px;font-size:11.3px;line-height:16px;color:#16203f;letter-spacing:0.240px;-webkit-text-stroke:0.2px currentColor;">Standardlayout</span>
<div class="b" style="left:16px;top:253px;width:953px;height:40px;background:linear-gradient(#e9eff9 0%,#dbe5f4 45%,#c7d6ec 100%)"></div>
<span class="t" style="left:16.8px;top:258px;font-size:28px;line-height:32px;font-weight:bold;color:#000;-webkit-text-stroke:1.700px #000;letter-spacing:0.400px;transform-origin:0 0;transform:scaleX(1.169)" id="hd">Montag 23.02.2026 - Sonntag 01.03.2026</span>
<div class="b" style="left:16px;top:293px;width:953px;height:14px;background:linear-gradient(#f1f5fb,#dde7f5)"></div>
<span class="t" style="left:20.4px;top:293.2px;font-size:11px;line-height:13px;color:#1e395b;letter-spacing:-0.336px;">Umsatz</span>
<div class="b" style="left:16px;top:307px;width:952px;height:39px;background:#f0f0f0"></div>
<span class="t" style="left:24.1px;top:324.0px;font-size:11px;line-height:13px;color:#000;letter-spacing:-0.190px;">Ziehen Sie eine Spaltenüberschrift hierher um nach dieser Spalte zu gruppieren</span>
<div class="b" style="left:16px;top:346px;width:952px;height:19px;background:#fff"></div>
<span class="t" style="left:32.4px;top:350.5px;font-size:11px;line-height:13px;color:#000;">Stand</span>
<span class="t" style="left:117.4px;top:350.5px;font-size:11px;line-height:13px;color:#000;">Verkäufer</span>
<span class="t" style="left:219.9px;top:350.5px;font-size:11px;line-height:13px;color:#000;">Datum</span>
<span class="t" style="left:271.9px;top:350.5px;font-size:11px;line-height:13px;color:#000;">Zeit</span>
<span class="t" style="left:334.9px;top:350.5px;font-size:11px;line-height:13px;color:#000;">Währu</span>
<span class="t" style="left:370.4px;top:350.5px;font-size:11px;line-height:13px;color:#000;">ZBon</span>
<span class="t" style="left:411.9px;top:350.5px;font-size:11px;line-height:13px;color:#000;">KassenNr</span>
<span class="t" style="left:472.4px;top:350.5px;font-size:11px;line-height:13px;color:#000;">Betrag</span>
<span class="t" style="left:529.4px;top:350.5px;font-size:11px;line-height:13px;color:#000;">Typ</span>
<span class="t" style="left:751.9px;top:350.5px;font-size:11px;line-height:13px;color:#000;">Transaktion</span>
<span class="t" style="left:853.4px;top:350.5px;font-size:11px;line-height:13px;color:#000;">Grund</span>
<div class="b" style="left:22px;top:352px;width:4px;height:1px;background:#222"></div>
<div class="b" style="left:20px;top:352px;width:1px;height:1px;background:#222"></div>
<div class="b" style="left:22px;top:354px;width:4px;height:1px;background:#222"></div>
<div class="b" style="left:22px;top:356px;width:4px;height:1px;background:#222"></div>
<div class="b" style="left:20px;top:356px;width:1px;height:1px;background:#222"></div>
<div class="b" style="left:22px;top:358px;width:4px;height:1px;background:#222"></div>
<div class="b" style="left:22px;top:360px;width:4px;height:1px;background:#222"></div>
<div class="b" style="left:20px;top:360px;width:1px;height:1px;background:#222"></div>
<svg class="b" style="left:202px;top:352px" width="9" height="8" viewBox="0 0 9 8"><path d="M4.500 1l3.500 6h-7z" fill="#fff" stroke="#a0a0a0" stroke-width="1"/></svg>
<div class="b" style="left:28.5px;top:366px;width:938.5px;height:19px;background:#fff"></div>
<div class="c" style="left:28.5px;top:366px;width:84.0px;padding-left:3px;">Kopernikusstraße</div>
<div class="c" style="left:113.5px;top:366px;width:101.5px;padding-left:2px;">Hills,Katrin</div>
<div class="c" style="left:216.0px;top:366px;width:51.0px;padding-left:3px;">27.02.2026</div>
<div class="c" style="left:268.0px;top:366px;width:62.0px;padding-left:3px;">12:57</div>
<div class="c" style="left:331.0px;top:366px;width:34.5px;padding-left:3px;">EUR</div>
<div class="c" style="left:366.5px;top:366px;width:40.5px;text-align:right;padding-right:2px;">1</div>
<div class="c" style="left:408.0px;top:366px;width:59.5px;text-align:right;padding-right:2px;">1155</div>
<div class="c" style="left:468.5px;top:366px;width:56.0px;text-align:right;padding-right:2px;">0,00</div>
<div class="c" style="left:525.5px;top:366px;width:221.5px;padding-left:3px;">Wechselgeld</div>
<div class="c" style="left:748.0px;top:366px;width:100.5px;padding-left:3px;">Beleg</div>
<div class="c" style="left:849.5px;top:366px;width:116.5px;padding-left:3px;">Geldtransit</div>
<div class="b" style="left:28.5px;top:384px;width:938.5px;height:1px;background:#d4d4d4"></div>
<div class="b" style="left:28.5px;top:385px;width:938.5px;height:19px;background:#9bb8dd"></div>
<div class="c" style="left:28.5px;top:385px;width:84.0px;padding-left:3px;">Kopernikusstraße</div>
<div class="c" style="left:113.5px;top:385px;width:101.5px;padding-left:2px;">Hills,Katrin</div>
<div class="c" style="left:216.0px;top:385px;width:51.0px;padding-left:3px;">27.02.2026</div>
<div class="c" style="left:268.0px;top:385px;width:62.0px;padding-left:3px;">13:12</div>
<div class="c" style="left:331.0px;top:385px;width:34.5px;padding-left:3px;">EUR</div>
<div class="c" style="left:366.5px;top:385px;width:40.5px;text-align:right;padding-right:2px;">1</div>
<div class="c" style="left:408.0px;top:385px;width:59.5px;text-align:right;padding-right:2px;">1155</div>
<div class="c" style="left:468.5px;top:385px;width:56.0px;text-align:right;padding-right:2px;">0,00</div>
<div class="c" style="left:525.5px;top:385px;width:221.5px;padding-left:3px;">Wechselgeld</div>
<div class="c" style="left:748.0px;top:385px;width:100.5px;padding-left:3px;">Beleg</div>
<div class="c" style="left:849.5px;top:385px;width:116.5px;padding-left:3px;">Geldtransit</div>
<div class="b" style="left:28.5px;top:403px;width:938.5px;height:1px;background:#d4d4d4"></div>
<div class="b" style="left:28.5px;top:404px;width:938.5px;height:19px;background:#fff"></div>
<div class="c" style="left:28.5px;top:404px;width:84.0px;padding-left:3px;">Kopernikusstraße</div>
<div class="c" style="left:113.5px;top:404px;width:101.5px;padding-left:2px;">Hills,Katrin</div>
<div class="c" style="left:216.0px;top:404px;width:51.0px;padding-left:3px;">27.02.2026</div>
<div class="c" style="left:268.0px;top:404px;width:62.0px;padding-left:3px;">13:12</div>
<div class="c" style="left:331.0px;top:404px;width:34.5px;padding-left:3px;">EUR</div>
<div class="c" style="left:366.5px;top:404px;width:40.5px;text-align:right;padding-right:2px;">1</div>
<div class="c" style="left:408.0px;top:404px;width:59.5px;text-align:right;padding-right:2px;">1155</div>
<div class="c" style="left:468.5px;top:404px;width:56.0px;text-align:right;padding-right:2px;">-6,85</div>
<div class="c" style="left:525.5px;top:404px;width:221.5px;padding-left:3px;">Entnahme</div>
<div class="c" style="left:748.0px;top:404px;width:100.5px;padding-left:3px;">Beleg</div>
<div class="c" style="left:849.5px;top:404px;width:116.5px;padding-left:3px;">Geldtransit</div>
<div class="b" style="left:28.5px;top:422px;width:938.5px;height:1px;background:#d4d4d4"></div>
<div class="b" style="left:28.5px;top:423px;width:938.5px;height:19px;background:#9bb8dd"></div>
<div class="c" style="left:28.5px;top:423px;width:84.0px;padding-left:3px;">Kopernikusstraße</div>
<div class="c" style="left:113.5px;top:423px;width:101.5px;padding-left:2px;">Hills,Katrin</div>
<div class="c" style="left:216.0px;top:423px;width:51.0px;padding-left:3px;">27.02.2026</div>
<div class="c" style="left:268.0px;top:423px;width:62.0px;padding-left:3px;">13:14</div>
<div class="c" style="left:331.0px;top:423px;width:34.5px;padding-left:3px;">EUR</div>
<div class="c" style="left:366.5px;top:423px;width:40.5px;text-align:right;padding-right:2px;">2</div>
<div class="c" style="left:408.0px;top:423px;width:59.5px;text-align:right;padding-right:2px;">1155</div>
<div class="c" style="left:468.5px;top:423px;width:56.0px;text-align:right;padding-right:2px;">0,00</div>
<div class="c" style="left:525.5px;top:423px;width:221.5px;padding-left:3px;">Wechselgeld</div>
<div class="c" style="left:748.0px;top:423px;width:100.5px;padding-left:3px;">Beleg</div>
<div class="c" style="left:849.5px;top:423px;width:116.5px;padding-left:3px;">Geldtransit</div>
<div class="b" style="left:28.5px;top:441px;width:938.5px;height:1px;background:#d4d4d4"></div>
<div class="b" style="left:28.5px;top:442px;width:938.5px;height:19px;background:#fff"></div>
<div class="c" style="left:28.5px;top:442px;width:84.0px;padding-left:3px;">Wiberrytest</div>
<div class="c" style="left:113.5px;top:442px;width:101.5px;padding-left:2px;">Hills,Katrin</div>
<div class="c" style="left:216.0px;top:442px;width:51.0px;padding-left:3px;">27.02.2026</div>
<div class="c" style="left:268.0px;top:442px;width:62.0px;padding-left:3px;">13:18</div>
<div class="c" style="left:331.0px;top:442px;width:34.5px;padding-left:3px;">EUR</div>
<div class="c" style="left:366.5px;top:442px;width:40.5px;text-align:right;padding-right:2px;">3</div>
<div class="c" style="left:408.0px;top:442px;width:59.5px;text-align:right;padding-right:2px;">1155</div>
<div class="c" style="left:468.5px;top:442px;width:56.0px;text-align:right;padding-right:2px;">0,00</div>
<div class="c" style="left:525.5px;top:442px;width:221.5px;padding-left:3px;">Wechselgeld</div>
<div class="c" style="left:748.0px;top:442px;width:100.5px;padding-left:3px;">Beleg</div>
<div class="c" style="left:849.5px;top:442px;width:116.5px;padding-left:3px;">Geldtransit</div>
<div class="b" style="left:28.5px;top:460px;width:938.5px;height:1px;background:#d4d4d4"></div>
<div class="b" style="left:28.5px;top:461px;width:938.5px;height:19px;background:#9bb8dd"></div>
<div class="c" style="left:28.5px;top:461px;width:84.0px;padding-left:3px;">Wiberrytest</div>
<div class="c" style="left:113.5px;top:461px;width:101.5px;padding-left:2px;">Hills,Katrin</div>
<div class="c" style="left:216.0px;top:461px;width:51.0px;padding-left:3px;">27.02.2026</div>
<div class="c" style="left:268.0px;top:461px;width:62.0px;padding-left:3px;">13:19</div>
<div class="c" style="left:331.0px;top:461px;width:34.5px;padding-left:3px;">EUR</div>
<div class="c" style="left:366.5px;top:461px;width:40.5px;text-align:right;padding-right:2px;">3</div>
<div class="c" style="left:408.0px;top:461px;width:59.5px;text-align:right;padding-right:2px;">1155</div>
<div class="c" style="left:468.5px;top:461px;width:56.0px;text-align:right;padding-right:2px;">0,00</div>
<div class="c" style="left:525.5px;top:461px;width:221.5px;padding-left:3px;">Wechselgeld</div>
<div class="c" style="left:748.0px;top:461px;width:100.5px;padding-left:3px;">Beleg</div>
<div class="c" style="left:849.5px;top:461px;width:116.5px;padding-left:3px;">Geldtransit</div>
<div class="b" style="left:28.5px;top:479px;width:938.5px;height:1px;background:#d4d4d4"></div>
<div class="b" style="left:28.5px;top:480px;width:938.5px;height:19px;background:#0078d7"></div>
<div class="b" style="left:28.5px;top:480px;width:938.5px;height:1px;border-top:1px dotted #ff9a3c"></div>
<div class="b" style="left:28.5px;top:497px;width:938.5px;height:1px;border-top:1px dotted #ff9a3c"></div>
<div class="c" style="left:28.5px;top:480px;width:84.0px;padding-left:3px;color:#fff;">1 Musterhausen</div>
<div class="c" style="left:113.5px;top:480px;width:101.5px;padding-left:2px;background:#fff;border:1px dotted #000;line-height:17px;padding-left:1px;">Klopp,Jürgen</div>
<div class="c" style="left:216.0px;top:480px;width:51.0px;padding-left:3px;color:#fff;">23.02.2026</div>
<div class="c" style="left:268.0px;top:480px;width:62.0px;padding-left:3px;color:#fff;">08:47</div>
<div class="c" style="left:331.0px;top:480px;width:34.5px;padding-left:3px;color:#fff;">EUR</div>
<div class="c" style="left:366.5px;top:480px;width:40.5px;text-align:right;padding-right:2px;color:#fff;">2</div>
<div class="c" style="left:408.0px;top:480px;width:59.5px;text-align:right;padding-right:2px;color:#fff;">506</div>
<div class="c" style="left:468.5px;top:480px;width:56.0px;text-align:right;padding-right:2px;color:#fff;">52,00</div>
<div class="c" style="left:525.5px;top:480px;width:221.5px;padding-left:3px;color:#fff;">Wechselgeld</div>
<div class="c" style="left:748.0px;top:480px;width:100.5px;padding-left:3px;color:#fff;">Beleg</div>
<div class="c" style="left:849.5px;top:480px;width:116.5px;padding-left:3px;color:#fff;">Geldtransit</div>
<div class="b" style="left:28.5px;top:498px;width:938.5px;height:1px;background:#d4d4d4"></div>
<div class="b" style="left:28.5px;top:499px;width:938.5px;height:19px;background:#9bb8dd"></div>
<div class="c" style="left:28.5px;top:499px;width:84.0px;padding-left:3px;">1 Musterhausen</div>
<div class="c" style="left:113.5px;top:499px;width:101.5px;padding-left:2px;">Klopp,Jürgen</div>
<div class="c" style="left:216.0px;top:499px;width:51.0px;padding-left:3px;">23.02.2026</div>
<div class="c" style="left:268.0px;top:499px;width:62.0px;padding-left:3px;">07:26</div>
<div class="c" style="left:331.0px;top:499px;width:34.5px;padding-left:3px;">EUR</div>
<div class="c" style="left:366.5px;top:499px;width:40.5px;text-align:right;padding-right:2px;">5</div>
<div class="c" style="left:408.0px;top:499px;width:59.5px;text-align:right;padding-right:2px;">1129</div>
<div class="c" style="left:468.5px;top:499px;width:56.0px;text-align:right;padding-right:2px;">60,00</div>
<div class="c" style="left:525.5px;top:499px;width:221.5px;padding-left:3px;">Wechselgeld</div>
<div class="c" style="left:748.0px;top:499px;width:100.5px;padding-left:3px;">Beleg</div>
<div class="c" style="left:849.5px;top:499px;width:116.5px;padding-left:3px;">Geldtransit</div>
<div class="b" style="left:28.5px;top:517px;width:938.5px;height:1px;background:#d4d4d4"></div>
<div class="b" style="left:28.5px;top:518px;width:938.5px;height:19px;background:#fff"></div>
<div class="c" style="left:28.5px;top:518px;width:84.0px;padding-left:3px;">Henning</div>
<div class="c" style="left:113.5px;top:518px;width:101.5px;padding-left:2px;">Klopp,Jürgen</div>
<div class="c" style="left:216.0px;top:518px;width:51.0px;padding-left:3px;">26.02.2026</div>
<div class="c" style="left:268.0px;top:518px;width:62.0px;padding-left:3px;">12:54</div>
<div class="c" style="left:331.0px;top:518px;width:34.5px;padding-left:3px;">EUR</div>
<div class="c" style="left:366.5px;top:518px;width:40.5px;text-align:right;padding-right:2px;">2</div>
<div class="c" style="left:408.0px;top:518px;width:59.5px;text-align:right;padding-right:2px;">1130</div>
<div class="c" style="left:468.5px;top:518px;width:56.0px;text-align:right;padding-right:2px;">20,00</div>
<div class="c" style="left:525.5px;top:518px;width:221.5px;padding-left:3px;">Wechselgeld</div>
<div class="c" style="left:748.0px;top:518px;width:100.5px;padding-left:3px;">Beleg</div>
<div class="c" style="left:849.5px;top:518px;width:116.5px;padding-left:3px;">Geldtransit</div>
<div class="b" style="left:28.5px;top:536px;width:938.5px;height:1px;background:#d4d4d4"></div>
<div class="b" style="left:28.5px;top:537px;width:938.5px;height:19px;background:#9bb8dd"></div>
<div class="c" style="left:28.5px;top:537px;width:84.0px;padding-left:3px;">Henning</div>
<div class="c" style="left:113.5px;top:537px;width:101.5px;padding-left:2px;">Klopp,Jürgen</div>
<div class="c" style="left:216.0px;top:537px;width:51.0px;padding-left:3px;">23.02.2026</div>
<div class="c" style="left:268.0px;top:537px;width:62.0px;padding-left:3px;">09:10</div>
<div class="c" style="left:331.0px;top:537px;width:34.5px;padding-left:3px;">EUR</div>
<div class="c" style="left:366.5px;top:537px;width:40.5px;text-align:right;padding-right:2px;">1</div>
<div class="c" style="left:408.0px;top:537px;width:59.5px;text-align:right;padding-right:2px;">1132</div>
<div class="c" style="left:468.5px;top:537px;width:56.0px;text-align:right;padding-right:2px;">52,00</div>
<div class="c" style="left:525.5px;top:537px;width:221.5px;padding-left:3px;">Wechselgeld</div>
<div class="c" style="left:748.0px;top:537px;width:100.5px;padding-left:3px;">Beleg</div>
<div class="c" style="left:849.5px;top:537px;width:116.5px;padding-left:3px;">Geldtransit</div>
<div class="b" style="left:28.5px;top:555px;width:938.5px;height:1px;background:#d4d4d4"></div>
<div class="b" style="left:28.5px;top:556px;width:938.5px;height:19px;background:#fff"></div>
<div class="c" style="left:28.5px;top:556px;width:84.0px;padding-left:3px;">Henning</div>
<div class="c" style="left:113.5px;top:556px;width:101.5px;padding-left:2px;">Klopp,Jürgen</div>
<div class="c" style="left:216.0px;top:556px;width:51.0px;padding-left:3px;">24.02.2026</div>
<div class="c" style="left:268.0px;top:556px;width:62.0px;padding-left:3px;">06:47</div>
<div class="c" style="left:331.0px;top:556px;width:34.5px;padding-left:3px;">EUR</div>
<div class="c" style="left:366.5px;top:556px;width:40.5px;text-align:right;padding-right:2px;">2</div>
<div class="c" style="left:408.0px;top:556px;width:59.5px;text-align:right;padding-right:2px;">1132</div>
<div class="c" style="left:468.5px;top:556px;width:56.0px;text-align:right;padding-right:2px;">62,00</div>
<div class="c" style="left:525.5px;top:556px;width:221.5px;padding-left:3px;">Wechselgeld</div>
<div class="c" style="left:748.0px;top:556px;width:100.5px;padding-left:3px;">Beleg</div>
<div class="c" style="left:849.5px;top:556px;width:116.5px;padding-left:3px;">Geldtransit</div>
<div class="b" style="left:28.5px;top:574px;width:938.5px;height:1px;background:#d4d4d4"></div>
<div class="b" style="left:28.5px;top:575px;width:938.5px;height:19px;background:#9bb8dd"></div>
<div class="c" style="left:28.5px;top:575px;width:84.0px;padding-left:3px;">Teststand (Rania)</div>
<div class="c" style="left:113.5px;top:575px;width:101.5px;padding-left:2px;">Klopp,Jürgen</div>
<div class="c" style="left:216.0px;top:575px;width:51.0px;padding-left:3px;">24.02.2026</div>
<div class="c" style="left:268.0px;top:575px;width:62.0px;padding-left:3px;">07:18</div>
<div class="c" style="left:331.0px;top:575px;width:34.5px;padding-left:3px;">EUR</div>
<div class="c" style="left:366.5px;top:575px;width:40.5px;text-align:right;padding-right:2px;">1</div>
<div class="c" style="left:408.0px;top:575px;width:59.5px;text-align:right;padding-right:2px;">1146</div>
<div class="c" style="left:468.5px;top:575px;width:56.0px;text-align:right;padding-right:2px;">50,00</div>
<div class="c" style="left:525.5px;top:575px;width:221.5px;padding-left:3px;">Wechselgeld</div>
<div class="c" style="left:748.0px;top:575px;width:100.5px;padding-left:3px;">Beleg</div>
<div class="c" style="left:849.5px;top:575px;width:116.5px;padding-left:3px;">Geldtransit</div>
<div class="b" style="left:28.5px;top:593px;width:938.5px;height:1px;background:#d4d4d4"></div>
<div class="b" style="left:28.5px;top:594px;width:938.5px;height:19px;background:#fff"></div>
<div class="c" style="left:28.5px;top:594px;width:84.0px;padding-left:3px;">Teststand (Rania)</div>
<div class="c" style="left:113.5px;top:594px;width:101.5px;padding-left:2px;">Klopp,Jürgen</div>
<div class="c" style="left:216.0px;top:594px;width:51.0px;padding-left:3px;">24.02.2026</div>
<div class="c" style="left:268.0px;top:594px;width:62.0px;padding-left:3px;">07:23</div>
<div class="c" style="left:331.0px;top:594px;width:34.5px;padding-left:3px;">EUR</div>
<div class="c" style="left:366.5px;top:594px;width:40.5px;text-align:right;padding-right:2px;">1</div>
<div class="c" style="left:408.0px;top:594px;width:59.5px;text-align:right;padding-right:2px;">1147</div>
<div class="c" style="left:468.5px;top:594px;width:56.0px;text-align:right;padding-right:2px;">52,00</div>
<div class="c" style="left:525.5px;top:594px;width:221.5px;padding-left:3px;">Wechselgeld</div>
<div class="c" style="left:748.0px;top:594px;width:100.5px;padding-left:3px;">Beleg</div>
<div class="c" style="left:849.5px;top:594px;width:116.5px;padding-left:3px;">Geldtransit</div>
<div class="b" style="left:28.5px;top:612px;width:938.5px;height:1px;background:#d4d4d4"></div>
<div class="b" style="left:28.5px;top:613px;width:938.5px;height:19px;background:#9bb8dd"></div>
<div class="c" style="left:28.5px;top:613px;width:84.0px;padding-left:3px;">Teststand (Rania)</div>
<div class="c" style="left:113.5px;top:613px;width:101.5px;padding-left:2px;">Klopp,Jürgen</div>
<div class="c" style="left:216.0px;top:613px;width:51.0px;padding-left:3px;">25.02.2026</div>
<div class="c" style="left:268.0px;top:613px;width:62.0px;padding-left:3px;">06:54</div>
<div class="c" style="left:331.0px;top:613px;width:34.5px;padding-left:3px;">EUR</div>
<div class="c" style="left:366.5px;top:613px;width:40.5px;text-align:right;padding-right:2px;">2</div>
<div class="c" style="left:408.0px;top:613px;width:59.5px;text-align:right;padding-right:2px;">1147</div>
<div class="c" style="left:468.5px;top:613px;width:56.0px;text-align:right;padding-right:2px;">45,00</div>
<div class="c" style="left:525.5px;top:613px;width:221.5px;padding-left:3px;">Wechselgeld</div>
<div class="c" style="left:748.0px;top:613px;width:100.5px;padding-left:3px;">Beleg</div>
<div class="c" style="left:849.5px;top:613px;width:116.5px;padding-left:3px;">Geldtransit</div>
<div class="b" style="left:28.5px;top:631px;width:938.5px;height:1px;background:#d4d4d4"></div>
<div class="b" style="left:28.5px;top:632px;width:938.5px;height:19px;background:#fff"></div>
<div class="c" style="left:28.5px;top:632px;width:84.0px;padding-left:3px;">Österreich</div>
<div class="c" style="left:113.5px;top:632px;width:101.5px;padding-left:2px;">Klopp,Jürgen</div>
<div class="c" style="left:216.0px;top:632px;width:51.0px;padding-left:3px;">24.02.2026</div>
<div class="c" style="left:268.0px;top:632px;width:62.0px;padding-left:3px;">08:52</div>
<div class="c" style="left:331.0px;top:632px;width:34.5px;padding-left:3px;">EUR</div>
<div class="c" style="left:366.5px;top:632px;width:40.5px;text-align:right;padding-right:2px;">1</div>
<div class="c" style="left:408.0px;top:632px;width:59.5px;text-align:right;padding-right:2px;">1148</div>
<div class="c" style="left:468.5px;top:632px;width:56.0px;text-align:right;padding-right:2px;">1,00</div>
<div class="c" style="left:525.5px;top:632px;width:221.5px;padding-left:3px;">Wechselgeld</div>
<div class="c" style="left:748.0px;top:632px;width:100.5px;padding-left:3px;">Beleg</div>
<div class="c" style="left:849.5px;top:632px;width:116.5px;padding-left:3px;">Geldtransit</div>
<div class="b" style="left:28.5px;top:650px;width:938.5px;height:1px;background:#d4d4d4"></div>
<div class="b" style="left:28.5px;top:651px;width:938.5px;height:19px;background:#9bb8dd"></div>
<div class="c" style="left:28.5px;top:651px;width:84.0px;padding-left:3px;">Henning</div>
<div class="c" style="left:113.5px;top:651px;width:101.5px;padding-left:2px;">Klopp,Jürgen</div>
<div class="c" style="left:216.0px;top:651px;width:51.0px;padding-left:3px;">24.02.2026</div>
<div class="c" style="left:268.0px;top:651px;width:62.0px;padding-left:3px;">13:38</div>
<div class="c" style="left:331.0px;top:651px;width:34.5px;padding-left:3px;">EUR</div>
<div class="c" style="left:366.5px;top:651px;width:40.5px;text-align:right;padding-right:2px;">1</div>
<div class="c" style="left:408.0px;top:651px;width:59.5px;text-align:right;padding-right:2px;">1151</div>
<div class="c" style="left:468.5px;top:651px;width:56.0px;text-align:right;padding-right:2px;">20,00</div>
<div class="c" style="left:525.5px;top:651px;width:221.5px;padding-left:3px;">Wechselgeld</div>
<div class="c" style="left:748.0px;top:651px;width:100.5px;padding-left:3px;">Beleg</div>
<div class="c" style="left:849.5px;top:651px;width:116.5px;padding-left:3px;">Geldtransit</div>
<div class="b" style="left:28.5px;top:669px;width:938.5px;height:1px;background:#d4d4d4"></div>
<div class="b" style="left:28.5px;top:670px;width:938.5px;height:19px;background:#fff"></div>
<div class="c" style="left:28.5px;top:670px;width:84.0px;padding-left:3px;">Teststand (Rania)</div>
<div class="c" style="left:113.5px;top:670px;width:101.5px;padding-left:2px;">Klopp,Jürgen</div>
<div class="c" style="left:216.0px;top:670px;width:51.0px;padding-left:3px;">24.02.2026</div>
<div class="c" style="left:268.0px;top:670px;width:62.0px;padding-left:3px;">15:10</div>
<div class="c" style="left:331.0px;top:670px;width:34.5px;padding-left:3px;">EUR</div>
<div class="c" style="left:366.5px;top:670px;width:40.5px;text-align:right;padding-right:2px;">1</div>
<div class="c" style="left:408.0px;top:670px;width:59.5px;text-align:right;padding-right:2px;">1152</div>
<div class="c" style="left:468.5px;top:670px;width:56.0px;text-align:right;padding-right:2px;">2,00</div>
<div class="c" style="left:525.5px;top:670px;width:221.5px;padding-left:3px;">Wechselgeld</div>
<div class="c" style="left:748.0px;top:670px;width:100.5px;padding-left:3px;">Beleg</div>
<div class="c" style="left:849.5px;top:670px;width:116.5px;padding-left:3px;">Geldtransit</div>
<div class="b" style="left:28.5px;top:688px;width:938.5px;height:1px;background:#d4d4d4"></div>
<div class="b" style="left:28.5px;top:689px;width:938.5px;height:19px;background:#9bb8dd"></div>
<div class="c" style="left:28.5px;top:689px;width:84.0px;padding-left:3px;">Henning</div>
<div class="c" style="left:113.5px;top:689px;width:101.5px;padding-left:2px;">Klopp,Jürgen</div>
<div class="c" style="left:216.0px;top:689px;width:51.0px;padding-left:3px;">27.02.2026</div>
<div class="c" style="left:268.0px;top:689px;width:62.0px;padding-left:3px;">08:30</div>
<div class="c" style="left:331.0px;top:689px;width:34.5px;padding-left:3px;">EUR</div>
<div class="c" style="left:366.5px;top:689px;width:40.5px;text-align:right;padding-right:2px;">1</div>
<div class="c" style="left:408.0px;top:689px;width:59.5px;text-align:right;padding-right:2px;">1153</div>
<div class="c" style="left:468.5px;top:689px;width:56.0px;text-align:right;padding-right:2px;">20,00</div>
<div class="c" style="left:525.5px;top:689px;width:221.5px;padding-left:3px;">Wechselgeld</div>
<div class="c" style="left:748.0px;top:689px;width:100.5px;padding-left:3px;">Beleg</div>
<div class="c" style="left:849.5px;top:689px;width:116.5px;padding-left:3px;">Geldtransit</div>
<div class="b" style="left:28.5px;top:707px;width:938.5px;height:1px;background:#d4d4d4"></div>
<div class="b" style="left:28.5px;top:708px;width:938.5px;height:19px;background:#fff"></div>
<div class="c" style="left:28.5px;top:708px;width:84.0px;padding-left:3px;">Henning</div>
<div class="c" style="left:113.5px;top:708px;width:101.5px;padding-left:2px;">Klopp,Jürgen</div>
<div class="c" style="left:216.0px;top:708px;width:51.0px;padding-left:3px;">27.02.2026</div>
<div class="c" style="left:268.0px;top:708px;width:62.0px;padding-left:3px;">08:35</div>
<div class="c" style="left:331.0px;top:708px;width:34.5px;padding-left:3px;">EUR</div>
<div class="c" style="left:366.5px;top:708px;width:40.5px;text-align:right;padding-right:2px;">1</div>
<div class="c" style="left:408.0px;top:708px;width:59.5px;text-align:right;padding-right:2px;">1153</div>
<div class="c" style="left:468.5px;top:708px;width:56.0px;text-align:right;padding-right:2px;">-20,00</div>
<div class="c" style="left:525.5px;top:708px;width:221.5px;padding-left:3px;">Wechselgeld</div>
<div class="c" style="left:748.0px;top:708px;width:100.5px;padding-left:3px;">Beleg</div>
<div class="c" style="left:849.5px;top:708px;width:116.5px;padding-left:3px;">Geldtransit</div>
<div class="b" style="left:28.5px;top:726px;width:938.5px;height:1px;background:#d4d4d4"></div>
<div class="b" style="left:28.5px;top:727px;width:938.5px;height:19px;background:#9bb8dd"></div>
<div class="c" style="left:28.5px;top:727px;width:84.0px;padding-left:3px;">Teststand Kunde</div>
<div class="c" style="left:113.5px;top:727px;width:101.5px;padding-left:2px;">Klopp,Jürgen</div>
<div class="c" style="left:216.0px;top:727px;width:51.0px;padding-left:3px;">27.02.2026</div>
<div class="c" style="left:268.0px;top:727px;width:62.0px;padding-left:3px;">08:43</div>
<div class="c" style="left:331.0px;top:727px;width:34.5px;padding-left:3px;">EUR</div>
<div class="c" style="left:366.5px;top:727px;width:40.5px;text-align:right;padding-right:2px;">2</div>
<div class="c" style="left:408.0px;top:727px;width:59.5px;text-align:right;padding-right:2px;">1153</div>
<div class="c" style="left:468.5px;top:727px;width:56.0px;text-align:right;padding-right:2px;">2,00</div>
<div class="c" style="left:525.5px;top:727px;width:221.5px;padding-left:3px;">Wechselgeld</div>
<div class="c" style="left:748.0px;top:727px;width:100.5px;padding-left:3px;">Beleg</div>
<div class="c" style="left:849.5px;top:727px;width:116.5px;padding-left:3px;">Geldtransit</div>
<div class="b" style="left:28.5px;top:745px;width:938.5px;height:1px;background:#d4d4d4"></div>
<div class="b" style="left:28.5px;top:746px;width:938.5px;height:19px;background:#fff"></div>
<div class="c" style="left:28.5px;top:746px;width:84.0px;padding-left:3px;">1 Musterhausen</div>
<div class="c" style="left:113.5px;top:746px;width:101.5px;padding-left:2px;">Mustermann,Max</div>
<div class="c" style="left:216.0px;top:746px;width:51.0px;padding-left:3px;">27.02.2026</div>
<div class="c" style="left:268.0px;top:746px;width:62.0px;padding-left:3px;">09:04</div>
<div class="c" style="left:331.0px;top:746px;width:34.5px;padding-left:3px;">EUR</div>
<div class="c" style="left:366.5px;top:746px;width:40.5px;text-align:right;padding-right:2px;">1</div>
<div class="c" style="left:408.0px;top:746px;width:59.5px;text-align:right;padding-right:2px;">1124</div>
<div class="c" style="left:468.5px;top:746px;width:56.0px;text-align:right;padding-right:2px;">200,00</div>
<div class="c" style="left:525.5px;top:746px;width:221.5px;padding-left:3px;">Wechselgeld</div>
<div class="c" style="left:748.0px;top:746px;width:100.5px;padding-left:3px;">Beleg</div>
<div class="c" style="left:849.5px;top:746px;width:116.5px;padding-left:3px;">Geldtransit</div>
<div class="b" style="left:28.5px;top:764px;width:938.5px;height:1px;background:#d4d4d4"></div>
<div class="b" style="left:28.5px;top:765px;width:938.5px;height:19px;background:#9bb8dd"></div>
<div class="c" style="left:28.5px;top:765px;width:84.0px;padding-left:3px;">Hamburger Str.</div>
<div class="c" style="left:113.5px;top:765px;width:101.5px;padding-left:2px;">Tester,Tom</div>
<div class="c" style="left:216.0px;top:765px;width:51.0px;padding-left:3px;">27.02.2026</div>
<div class="c" style="left:268.0px;top:765px;width:62.0px;padding-left:3px;">09:48</div>
<div class="c" style="left:331.0px;top:765px;width:34.5px;padding-left:3px;">EUR</div>
<div class="c" style="left:366.5px;top:765px;width:40.5px;text-align:right;padding-right:2px;">1</div>
<div class="c" style="left:408.0px;top:765px;width:59.5px;text-align:right;padding-right:2px;">1154</div>
<div class="c" style="left:468.5px;top:765px;width:56.0px;text-align:right;padding-right:2px;">200,00</div>
<div class="c" style="left:525.5px;top:765px;width:221.5px;padding-left:3px;">Wechselgeld</div>
<div class="c" style="left:748.0px;top:765px;width:100.5px;padding-left:3px;">Beleg</div>
<div class="c" style="left:849.5px;top:765px;width:116.5px;padding-left:3px;">Geldtransit</div>
<div class="b" style="left:28.5px;top:783px;width:938.5px;height:1px;background:#d4d4d4"></div>
<div class="b" style="left:112.5px;top:346px;width:1px;height:439px;background:#d4d4d4"></div>
<div class="b" style="left:215px;top:346px;width:1px;height:439px;background:#d4d4d4"></div>
<div class="b" style="left:267px;top:346px;width:1px;height:439px;background:#d4d4d4"></div>
<div class="b" style="left:330px;top:346px;width:1px;height:439px;background:#d4d4d4"></div>
<div class="b" style="left:365.5px;top:346px;width:1px;height:439px;background:#d4d4d4"></div>
<div class="b" style="left:407px;top:346px;width:1px;height:439px;background:#d4d4d4"></div>
<div class="b" style="left:467.5px;top:346px;width:1px;height:439px;background:#d4d4d4"></div>
<div class="b" style="left:524.5px;top:346px;width:1px;height:439px;background:#d4d4d4"></div>
<div class="b" style="left:747px;top:346px;width:1px;height:439px;background:#d4d4d4"></div>
<div class="b" style="left:848.5px;top:346px;width:1px;height:439px;background:#d4d4d4"></div>
<div class="b" style="left:966px;top:346px;width:1px;height:439px;background:#d4d4d4"></div>
<div class="b" style="left:28px;top:346px;width:1px;height:439px;background:#d4d4d4"></div>
<svg class="b" style="left:21px;top:485px" width="6" height="10" viewBox="0 0 6 10"><path d="M0.500 0.500l4.500 4.500-4.500 4.500z" fill="#000"/></svg>
<div class="b" style="left:968px;top:253px;width:219px;height:576px;background:#d8e4f4"></div>
<div class="b" style="left:969px;top:269px;width:218px;height:33px;background:linear-gradient(#e6eef9,#d6e3f4)"></div>
<div class="b" style="left:969px;top:318px;width:218px;height:77px;background:linear-gradient(#e6eef9,#d3e0f2)"></div>
<div class="b" style="left:969px;top:411px;width:218px;height:129px;background:linear-gradient(#e9f0fa,#cfddf1)"></div>
<div class="b" style="left:969px;top:555px;width:218px;height:274px;background:linear-gradient(#edf3fb 0%,#dde8f6 40%,#d4e1f3 100%)"></div>
<div class="b" style="left:968px;top:253px;width:1px;height:576px;background:#93a4bc"></div>
<div class="b" style="left:969px;top:253px;width:1px;height:576px;background:#f4f8fd"></div>
<div class="b" style="left:969px;top:252px;width:218px;height:17px;background:linear-gradient(#e4ecf8,#c9d8ee)"></div>
<span class="t" style="left:973.1px;top:253.0px;font-size:11px;line-height:13px;color:#000;">Standort</span>
<svg class="b" style="left:975px;top:275px" width="16" height="16" viewBox="0 0 16 16"><rect width="16" height="16" rx="1.800" fill="#47ae88"/><path d="M12 8h-7.500M7.800 4.300l-3.700 3.700 3.700 3.700" fill="none" stroke="#fff" stroke-width="2" stroke-linecap="round" stroke-linejoin="round"/></svg>
<div class="b" style="left:995px;top:272px;width:200px;height:24px;background:#e2e2e2;border:1px solid #a3a3a3"></div>
<span class="t" style="left:998.5px;top:276.5px;font-size:13px;line-height:16px;color:#000;font-weight:bold;letter-spacing:0.951px;-webkit-text-stroke:0.4px currentColor;">Alle Stände</span>
<div class="b" style="left:969px;top:302px;width:218px;height:16px;background:linear-gradient(#e4ecf8,#c9d8ee)"></div>
<span class="t" style="left:973.1px;top:304.0px;font-size:11px;line-height:13px;color:#1e395b;">Betriebe</span>
<div class="b" style="left:999px;top:320px;width:190px;height:75px;background:#fff"></div>
<div class="b" style="left:977px;top:328px;width:1px;height:1px;background:#888"></div>
<div class="b" style="left:979px;top:328px;width:1px;height:1px;background:#888"></div>
<div class="b" style="left:981px;top:328px;width:1px;height:1px;background:#888"></div>
<div class="b" style="left:983px;top:328px;width:1px;height:1px;background:#888"></div>
<div class="b" style="left:985px;top:328px;width:1px;height:1px;background:#888"></div>
<div class="b" style="left:987px;top:328px;width:1px;height:1px;background:#888"></div>
<div class="b" style="left:989px;top:328px;width:1px;height:1px;background:#888"></div>
<svg class="b" style="left:977px;top:331px" width="14" height="14" viewBox="0 0 14 14"><rect x="0.500" y="0.500" width="13" height="13" fill="#f3f0f8" stroke="#2e2648"/><path d="M2.500 6.500l3.500 4 5.500-7.500" fill="none" stroke="#2a9a9a" stroke-width="2.400"/></svg>
<svg class="b" style="left:977px;top:355px" width="14" height="14" viewBox="0 0 14 14"><rect x="0.500" y="0.500" width="13" height="13" fill="#f6f1fa" stroke="#3c3050"/></svg>
<svg class="b" style="left:1002px;top:322px" width="13" height="13" viewBox="0 0 13 13"><rect x="0.500" y="0.500" width="12" height="12" fill="#fff" stroke="#333"/><path d="M2.500 6.500l2.700 3 5-6.500" fill="none" stroke="#333" stroke-width="1.100"/></svg>
<span class="t" style="left:1018.1px;top:322.5px;font-size:11px;line-height:13px;color:#000;letter-spacing:-0.229px;">Betrieb Uebungsmodus</span>
<svg class="b" style="left:1002px;top:337px" width="13" height="13" viewBox="0 0 13 13"><rect x="0.500" y="0.500" width="12" height="12" fill="#fff" stroke="#333"/><path d="M2.500 6.500l2.700 3 5-6.500" fill="none" stroke="#333" stroke-width="1.100"/></svg>
<span class="t" style="left:1018.1px;top:337.5px;font-size:11px;line-height:13px;color:#000;letter-spacing:-0.048px;">Hof Wichmann</span>
<svg class="b" style="left:1002px;top:352px" width="13" height="13" viewBox="0 0 13 13"><rect x="0.500" y="0.500" width="12" height="12" fill="#fff" stroke="#333"/><path d="M2.500 6.500l2.700 3 5-6.500" fill="none" stroke="#333" stroke-width="1.100"/></svg>
<span class="t" style="left:1018.1px;top:352.5px;font-size:11px;line-height:13px;color:#000;letter-spacing:-0.187px;">Kristian Wichmann</span>
<svg class="b" style="left:1002px;top:367px" width="13" height="13" viewBox="0 0 13 13"><rect x="0.500" y="0.500" width="12" height="12" fill="#fff" stroke="#333"/><path d="M2.500 6.500l2.700 3 5-6.500" fill="none" stroke="#333" stroke-width="1.100"/></svg>
<span class="t" style="left:1018.1px;top:367.5px;font-size:11px;line-height:13px;color:#000;letter-spacing:-0.133px;">Testbetrieb Österreich</span>
<svg class="b" style="left:1002px;top:382px" width="13" height="13" viewBox="0 0 13 13"><rect x="0.500" y="0.500" width="12" height="12" fill="#fff" stroke="#333"/><path d="M2.500 6.500l2.700 3 5-6.500" fill="none" stroke="#333" stroke-width="1.100"/></svg>
<span class="t" style="left:1018.1px;top:382.5px;font-size:11px;line-height:13px;color:#000;letter-spacing:-0.062px;">Testbetrieb Schweiz</span>
<div class="b" style="left:969px;top:395px;width:218px;height:16px;background:linear-gradient(#e4ecf8,#c9d8ee)"></div>
<span class="t" style="left:973.1px;top:396.2px;font-size:11px;line-height:13px;color:#1e395b;">Zeitraum</span>
<svg class="b" style="left:976.5px;top:418.5px" width="13" height="13" viewBox="0 0 13 13"><circle cx="6.500" cy="6.500" r="5.700" fill="#f4f4f4" stroke="#8a8a8a" stroke-width="1"/><circle cx="6.500" cy="6.500" r="4.500" fill="none" stroke="#d8d8d8" stroke-width="1"/></svg>
<span class="t" style="left:995.1px;top:417.5px;font-size:11px;line-height:13px;color:#000;">Tag</span>
<svg class="b" style="left:1035px;top:418px" width="16" height="16" viewBox="0 0 16 16"><rect width="16" height="16" rx="1.800" fill="#47ae88"/><path d="M12 8h-7.500M7.800 4.300l-3.700 3.700 3.700 3.700" fill="none" stroke="#fff" stroke-width="2" stroke-linecap="round" stroke-linejoin="round"/></svg>
<div class="b" style="left:1054px;top:416px;width:117px;height:21px;background:#fff;border:1px solid #7a7a7a"></div>
<span class="t" style="left:1056.1px;top:420.5px;font-size:11px;line-height:13px;color:#000;">01.</span>
<span class="t" style="left:1085.1px;top:420.5px;font-size:11px;line-height:13px;color:#000;">März</span>
<span class="t" style="left:1125.1px;top:420.5px;font-size:11px;line-height:13px;color:#000;">2026</span>
<svg class="b" style="left:1158px;top:424px" width="9" height="6" viewBox="0 0 9 6"><path d="M0.500 0.500l4 4 4-4" fill="none" stroke="#555" stroke-width="1"/></svg>
<svg class="b" style="left:1173px;top:418px" width="16" height="16" viewBox="0 0 16 16"><rect width="16" height="16" rx="1.800" fill="#47ae88"/><path d="M4 8h7.500M8.200 4.300l3.700 3.700-3.700 3.700" fill="none" stroke="#fff" stroke-width="2" stroke-linecap="round" stroke-linejoin="round"/></svg>
<svg class="b" style="left:976.5px;top:443.5px" width="13" height="13" viewBox="0 0 13 13"><circle cx="6.500" cy="6.500" r="5.700" fill="#f4f4f4" stroke="#8a8a8a" stroke-width="1"/><circle cx="6.500" cy="6.500" r="4.500" fill="none" stroke="#d8d8d8" stroke-width="1"/><circle cx="6.500" cy="6.500" r="3.300" fill="#1a6fd0"/><circle cx="5.600" cy="5.600" r="1.200" fill="#7fc0ff"/></svg>
<span class="t" style="left:994.6px;top:443.5px;font-size:11px;line-height:13px;color:#000;">Woche</span>
<svg class="b" style="left:1035px;top:442px" width="16" height="16" viewBox="0 0 16 16"><rect width="16" height="16" rx="1.800" fill="#47ae88"/><path d="M12 8h-7.500M7.800 4.300l-3.700 3.700 3.700 3.700" fill="none" stroke="#fff" stroke-width="2" stroke-linecap="round" stroke-linejoin="round"/></svg>
<div class="b" style="left:1054px;top:440px;width:85px;height:21px;background:#fff;border:1px solid #7a7a7a"></div>
<span class="t" style="left:1057.1px;top:444.5px;font-size:11px;line-height:13px;color:#000;">23.02.2026</span>
<div class="b" style="left:1121px;top:442px;width:16px;height:16px;background:#e1e1e1;border:1px solid #adadad"></div>
<svg class="b" style="left:1125px;top:448px" width="8" height="5" viewBox="0 0 8 5"><path d="M0 0h8l-4 4.500z" fill="#000"/></svg>
<svg class="b" style="left:1142px;top:442px" width="16" height="16" viewBox="0 0 16 16"><rect width="16" height="16" rx="1.800" fill="#47ae88"/><path d="M4 8h7.500M8.200 4.300l3.700 3.700-3.700 3.700" fill="none" stroke="#fff" stroke-width="2" stroke-linecap="round" stroke-linejoin="round"/></svg>
<span class="t" style="left:1169.0px;top:442.0px;font-size:12px;line-height:16px;color:#000;font-weight:bold;-webkit-text-stroke:0.25px currentColor;">KW</span>
<svg class="b" style="left:976.5px;top:467.5px" width="13" height="13" viewBox="0 0 13 13"><circle cx="6.500" cy="6.500" r="5.700" fill="#f4f4f4" stroke="#8a8a8a" stroke-width="1"/><circle cx="6.500" cy="6.500" r="4.500" fill="none" stroke="#d8d8d8" stroke-width="1"/></svg>
<span class="t" style="left:994.6px;top:467.5px;font-size:11px;line-height:13px;color:#000;">Monat</span>
<svg class="b" style="left:1035px;top:466px" width="16" height="16" viewBox="0 0 16 16"><rect width="16" height="16" rx="1.800" fill="#47ae88"/><path d="M12 8h-7.500M7.800 4.300l-3.700 3.700 3.700 3.700" fill="none" stroke="#fff" stroke-width="2" stroke-linecap="round" stroke-linejoin="round"/></svg>
<div class="b" style="left:1054px;top:464px;width:117px;height:21px;background:#fff;border:1px solid #7a7a7a"></div>
<span class="t" style="left:1070.1px;top:468.5px;font-size:11px;line-height:13px;color:#000;">März</span>
<span class="t" style="left:1110.1px;top:468.5px;font-size:11px;line-height:13px;color:#000;">2026</span>
<svg class="b" style="left:1156px;top:468px" width="12" height="12" viewBox="0 0 12 12"><rect x="0.500" y="0.500" width="10" height="10" rx="1" fill="#f4f4f4" stroke="#8a8a9a"/><path d="M2.500 3.500h6M2.500 5.500h6M2.500 7.500h6M4.500 2.500v6M6.500 2.500v6" stroke="#9a9ab0" stroke-width="0.800"/></svg>
<svg class="b" style="left:1173px;top:466px" width="16" height="16" viewBox="0 0 16 16"><rect width="16" height="16" rx="1.800" fill="#47ae88"/><path d="M4 8h7.500M8.200 4.300l3.700 3.700-3.700 3.700" fill="none" stroke="#fff" stroke-width="2" stroke-linecap="round" stroke-linejoin="round"/></svg>
<svg class="b" style="left:976.5px;top:491.5px" width="13" height="13" viewBox="0 0 13 13"><circle cx="6.500" cy="6.500" r="5.700" fill="#f4f4f4" stroke="#8a8a8a" stroke-width="1"/><circle cx="6.500" cy="6.500" r="4.500" fill="none" stroke="#d8d8d8" stroke-width="1"/></svg>
<span class="t" style="left:994.6px;top:491.5px;font-size:11px;line-height:13px;color:#000;">Jahr</span>
<svg class="b" style="left:1035px;top:490px" width="16" height="16" viewBox="0 0 16 16"><rect width="16" height="16" rx="1.800" fill="#47ae88"/><path d="M12 8h-7.500M7.800 4.300l-3.700 3.700 3.700 3.700" fill="none" stroke="#fff" stroke-width="2" stroke-linecap="round" stroke-linejoin="round"/></svg>
<div class="b" style="left:1054px;top:488px;width:65px;height:21px;background:#fff;border:1px solid #7a7a7a"></div>
<span class="t" style="left:1056.1px;top:492.5px;font-size:11px;line-height:13px;color:#000;">2026</span>
<div class="b" style="left:1101px;top:490px;width:16px;height:8px;background:#e8e8e8;border:1px solid #b8b8b8"></div>
<div class="b" style="left:1101px;top:498px;width:16px;height:8px;background:#e8e8e8;border:1px solid #b8b8b8"></div>
<svg class="b" style="left:1106px;top:492px" width="6" height="4" viewBox="0 0 6 4"><path d="M0 3.500h6l-3-3.500z" fill="#000"/></svg>
<svg class="b" style="left:1106px;top:500px" width="6" height="4" viewBox="0 0 6 4"><path d="M0 0h6l-3 3.500z" fill="#000"/></svg>
<svg class="b" style="left:1121px;top:490px" width="16" height="16" viewBox="0 0 16 16"><rect width="16" height="16" rx="1.800" fill="#47ae88"/><path d="M4 8h7.500M8.200 4.300l3.700 3.700-3.700 3.700" fill="none" stroke="#fff" stroke-width="2" stroke-linecap="round" stroke-linejoin="round"/></svg>
<svg class="b" style="left:976.5px;top:515.5px" width="13" height="13" viewBox="0 0 13 13"><circle cx="6.500" cy="6.500" r="5.700" fill="#f4f4f4" stroke="#8a8a8a" stroke-width="1"/><circle cx="6.500" cy="6.500" r="4.500" fill="none" stroke="#d8d8d8" stroke-width="1"/></svg>
<span class="t" style="left:994.6px;top:515.5px;font-size:11px;line-height:13px;color:#000;">Von:</span>
<div class="b" style="left:1033px;top:512px;width:85px;height:21px;background:#fff;border:1px solid #7a7a7a"></div>
<span class="t" style="left:1036.1px;top:516.5px;font-size:11px;line-height:13px;color:#000;">01.03.2026</span>
<div class="b" style="left:1100px;top:514px;width:16px;height:16px;background:#e1e1e1;border:1px solid #adadad"></div>
<svg class="b" style="left:1104px;top:520px" width="8" height="5" viewBox="0 0 8 5"><path d="M0 0h8l-4 4.500z" fill="#000"/></svg>
<span class="t" style="left:1124.1px;top:515.5px;font-size:11px;line-height:13px;color:#000;">Bis:</span>
<div class="b" style="left:1145px;top:512px;width:60px;height:21px;background:#fff;border:1px solid #7a7a7a"></div>
<span class="t" style="left:1148.1px;top:516.5px;font-size:11px;line-height:13px;color:#000;">31.03.2026</span>
<div class="b" style="left:969px;top:540px;width:218px;height:16px;background:linear-gradient(#e4ecf8,#c9d8ee)"></div>
<span class="t" style="left:973.1px;top:540.5px;font-size:11px;line-height:13px;color:#1e395b;">Filter</span>
<div class="b" style="left:994px;top:558.5px;width:34px;height:14px;background:#ebf1fa"></div>
<span class="t" style="left:994.6px;top:559.0px;font-size:11px;line-height:13px;color:#000;">Kasse:</span>
<div class="b" style="left:995px;top:575px;width:200px;height:24px;background:#e2e2e2;border:1px solid #a3a3a3"></div>
<span class="t" style="left:998.5px;top:579.3px;font-size:13.33px;line-height:16px;color:#000;letter-spacing:0.144px;">Alle Kassen</span>
<div class="b" style="left:994px;top:655px;width:53px;height:14px;background:#ebf1fa"></div>
<span class="t" style="left:994.6px;top:655.5px;font-size:11px;line-height:13px;color:#000;">Verkäufer:</span>
<div class="b" style="left:995px;top:671px;width:200px;height:24px;background:#e2e2e2;border:1px solid #a3a3a3"></div>
<span class="t" style="left:998.5px;top:675.3px;font-size:13.33px;line-height:16px;color:#000;letter-spacing:0.181px;">Alle Verkäufer</span>
<div class="b" style="left:994px;top:702.5px;width:36px;height:14px;background:#ebf1fa"></div>
<span class="t" style="left:994.6px;top:703.0px;font-size:11px;line-height:13px;color:#000;">Grund:</span>
<div class="b" style="left:995px;top:719px;width:200px;height:24px;background:#e2e2e2;border:1px solid #a3a3a3"></div>
<span class="t" style="left:998.5px;top:723.3px;font-size:13.33px;line-height:16px;color:#000;letter-spacing:0.044px;">Alle Gründe</span>
<div class="b" style="left:994px;top:750.5px;width:25px;height:14px;background:#ebf1fa"></div>
<span class="t" style="left:994.6px;top:751.0px;font-size:11px;line-height:13px;color:#000;">Typ:</span>
<div class="b" style="left:995px;top:767px;width:200px;height:24px;background:#e2e2e2;border:1px solid #a3a3a3"></div>
<span class="t" style="left:998.5px;top:771.3px;font-size:13.33px;line-height:16px;color:#000;letter-spacing:0.426px;">Alle Typen</span>
<div class="b" style="left:162px;top:31px;width:99px;height:40px;border:4px solid #ff0000"></div>
<div class="b" style="left:440px;top:106px;width:103px;height:42px;border:4px solid #ff0000"></div>
<div class="b" style="left:13px;top:307px;width:958px;height:67px;border:4px solid #ff0000"></div>
</body></html>
